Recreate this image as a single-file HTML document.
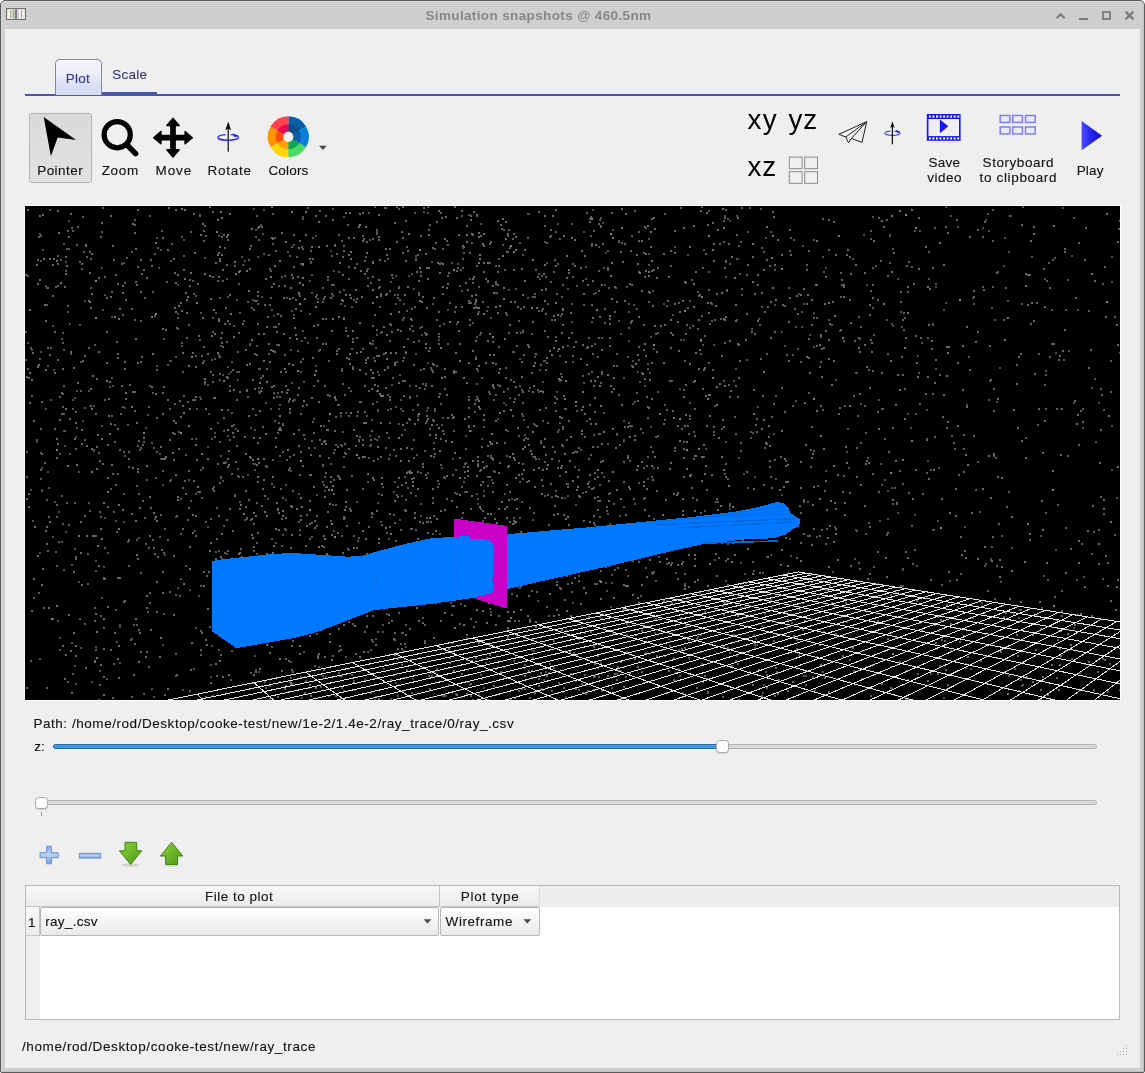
<!DOCTYPE html>
<html><head><meta charset="utf-8"><title>Simulation snapshots</title><style>
html,body{margin:0;padding:0;background:#fff}
body{width:1145px;height:1073px;position:relative;overflow:hidden;font-family:"Liberation Sans",sans-serif}
.a{position:absolute}
.t{position:absolute;white-space:nowrap;line-height:1}
#txt{position:absolute;left:0;top:0;width:1145px;height:1073px;will-change:transform}
#win{position:absolute;left:0;top:0;width:1143px;height:1071px;border:1px solid #5a5a5a;border-radius:5px 5px 2px 2px;background:#cfcfcf;box-shadow:inset 0 1px 0 #dcdcdc,inset 1px 0 0 #d8d8d8,inset -1px 0 0 #c2c2c2,inset 0 -1px 0 #c2c2c2}
#content{position:absolute;left:5px;top:29px;width:1135px;height:1039px;background:#efefef}
svg{position:absolute;overflow:visible}
</style></head><body>
<div id="win"></div><div id="content"></div>
<div class="a" style="left:25px;top:94px;width:1095px;height:2px;background:#4a58a8"></div><div class="a" style="left:102px;top:92px;width:55px;height:3px;background:#4a58a8"></div><div class="a" style="left:55px;top:59px;width:45px;height:35px;border:1px solid #8486a8;border-bottom:none;border-radius:5px 5px 0 0;background:linear-gradient(#f4f4ff 0%,#f0f0fc 38%,#dfe3f6 60%,#d3daf1 100%)"></div><div class="a" style="left:29px;top:113px;width:61px;height:68px;border:1px solid #b4b4b4;border-radius:3px;background:linear-gradient(#dadada,#e2e2e2)"></div><div class="a" style="left:53px;top:744px;width:1042px;height:3px;border:1px solid #b2b2b2;border-radius:3px;background:#d9d9d9"></div><div class="a" style="left:53px;top:744px;width:668px;height:3px;border:1px solid #2a6aa6;border-radius:3px;background:#3d9be2"></div><div class="a" style="left:716px;top:740px;width:11px;height:11px;border:1px solid #a9a9a9;border-radius:3.5px;background:#fcfcfc;box-shadow:0 1px 1px rgba(0,0,0,0.12)"></div><div class="a" style="left:41px;top:800px;width:1054px;height:3px;border:1px solid #b2b2b2;border-radius:3px;background:#d9d9d9"></div><div class="a" style="left:35px;top:797px;width:11px;height:10px;border:1px solid #a9a9a9;border-radius:3.5px;background:#fcfcfc;box-shadow:0 1px 1px rgba(0,0,0,0.12)"></div><div class="a" style="left:41px;top:812px;width:1px;height:4px;background:#9a9a9a"></div><div class="a" style="left:25px;top:885px;width:1093px;height:133px;border:1px solid #b9b9b9;background:#fff"></div><div class="a" style="left:26px;top:886px;width:1093px;height:21px;background:#ededed"></div><div class="a" style="left:26px;top:886px;width:413px;height:20px;border-bottom:1px solid #c4c4c4;border-right:1px solid #c4c4c4;background:linear-gradient(#f8f8f8,#ebebeb)"></div><div class="a" style="left:440px;top:886px;width:99px;height:20px;border-bottom:1px solid #c4c4c4;border-right:1px solid #dcdcdc;background:linear-gradient(#f8f8f8,#ebebeb)"></div><div class="a" style="left:26px;top:907px;width:14px;height:112px;background:#efefef"></div><div class="a" style="left:26px;top:907px;width:13px;height:28px;border-bottom:1px solid #c4c4c4;border-right:1px solid #c4c4c4;background:linear-gradient(#f8f8f8,#ebebeb)"></div><div class="a" style="left:40px;top:907px;width:397px;height:27px;border:1px solid #b6b6b6;border-radius:2px;background:linear-gradient(#ffffff,#f4f4f4 50%,#e9e9e9)"></div><div class="a" style="left:440px;top:907px;width:98px;height:27px;border:1px solid #b6b6b6;border-radius:2px;background:linear-gradient(#ffffff,#f4f4f4 50%,#e9e9e9)"></div>
<div style="position:absolute;left:24px;top:205px;width:1095px;height:494px;border:1px solid #fff;background:#000;overflow:hidden"><svg width="1095" height="494" viewBox="0 0 1095 494" style="position:absolute;left:0;top:0;display:block"><g stroke-width="2" fill="none" transform="translate(0,1)" shape-rendering="crispEdges"><path d="M0 68h2M4 103h2M4 196h2M12 77h2M12 160h2M12 349h2M14 9h2M14 73h2M16 247h2M23 401h2M24 52h2M32 4h2M36 186h2M39 472h2M41 59h2M45 145h2M46 21h2M48 161h2M48 365h2M50 216h2M50 439h2M55 346h2M56 237h2M63 94h2M66 87h2M66 242h2M67 169h2M71 451h2M76 232h2M78 371h2M81 125h2M93 112h2M94 102h2M97 86h2M97 303h2M114 426h2M121 259h2M121 389h2M126 180h2M128 306h2M132 350h2M142 43h2M144 233h2M147 226h2M148 52h2M148 214h2M149 101h2M150 105h2M150 268h2M159 72h2M163 159h2M167 308h2M169 46h2M170 238h2M170 309h2M175 28h2M176 426h2M177 156h2M183 365h2M187 282h2M192 48h2M193 309h2M194 150h2M196 48h2M196 136h2M196 203h2M201 170h2M202 223h2M203 468h2M204 302h2M209 55h2M212 224h2M214 64h2M215 298h2M217 117h2M224 138h2M224 157h2M227 331h2M235 171h2M238 154h2M238 273h2M241 309h2M244 446h2M246 0h2M249 145h2M253 323h2M256 185h2M260 452h2M263 263h2M263 485h2M264 192h2M264 202h2M265 81h2M267 71h2M268 396h2M270 128h2M279 486h2M283 374h2M284 268h2M286 40h2M289 321h2M290 481h2M292 118h2M294 249h2M295 219h2M299 290h2M300 237h2M301 223h2M302 70h2M303 379h2M305 270h2M306 124h2M307 279h2M314 272h2M315 206h2M319 303h2M327 135h2M329 61h2M331 146h2M333 20h2M333 234h2M334 7h2M337 238h2M341 46h2M346 306h2M346 433h2M348 273h2M349 478h2M352 240h2M353 149h2M358 147h2M360 321h2M368 468h2M369 156h2M369 433h2M370 146h2M373 81h2M373 105h2M377 0h2M377 218h2M379 88h2M383 27h2M384 190h2M389 311h2M391 401h2M392 332h2M397 362h2M400 268h2M401 315h2M405 249h2M406 179h2M408 214h2M408 242h2M410 324h2M413 221h2M414 57h2M414 66h2M414 187h2M416 171h2M416 382h2M417 224h2M419 32h2M419 170h2M419 406h2M421 269h2M423 442h2M423 461h2M429 0h2M429 246h2M430 100h2M433 124h2M435 331h2M437 39h2M439 399h2M441 35h2M441 453h2M441 487h2M445 13h2M445 489h2M446 289h2M447 72h2M450 95h2M453 26h2M457 275h2M457 404h2M458 107h2M462 307h2M462 493h2M466 227h2M466 251h2M468 86h2M468 148h2M470 344h2M471 316h2M474 179h2M476 356h2M479 132h2M479 302h2M479 336h2M481 45h2M482 405h2M483 293h2M484 118h2M489 491h2M490 271h2M498 338h2M503 389h2M506 247h2M507 185h2M507 225h2M509 330h2M510 147h2M511 101h2M513 261h2M516 273h2M517 483h2M526 148h2M526 252h2M527 366h2M528 141h2M531 378h2M532 108h2M535 261h2M535 382h2M536 126h2M538 481h2M539 247h2M540 174h2M540 312h2M541 49h2M541 277h2M547 274h2M548 323h2M550 135h2M550 358h2M553 289h2M553 432h2M561 141h2M566 139h2M566 282h2M567 74h2M567 111h2M572 170h2M574 374h2M577 254h2M584 109h2M586 92h2M588 470h2M596 2h2M600 308h2M602 379h2M603 280h2M610 157h2M611 48h2M612 460h2M613 34h2M620 47h2M620 64h2M621 370h2M624 173h2M624 353h2M626 12h2M639 449h2M648 211h2M648 473h2M649 474h2M656 357h2M657 308h2M658 21h2M658 190h2M659 219h2M659 441h2M664 157h2M669 304h2M674 386h2M679 267h2M679 469h2M681 6h2M681 472h2M683 188h2M684 188h2M691 180h2M694 177h2M695 299h2M697 399h2M698 263h2M698 440h2M704 134h2M706 355h2M709 71h2M710 307h2M715 377h2M716 304h2M720 133h2M720 376h2M721 265h2M726 125h2M727 367h2M738 213h2M742 325h2M742 350h2M749 489h2M762 359h2M765 48h2M777 396h2M781 150h2M786 93h2M787 298h2M798 141h2M798 425h2M802 383h2M803 96h2M808 259h2M822 43h2M833 131h2M839 138h2M840 257h2M846 136h2M848 34h2M852 345h2M862 432h2M866 65h2M867 293h2M870 198h2M875 387h2M880 345h2M887 292h2M903 118h2M915 413h2M917 210h2M929 412h2M936 348h2M938 429h2M939 344h2M940 248h2M940 461h2M941 200h2M948 84h2M950 135h2M963 249h2M965 173h2M966 354h2M972 270h2M974 353h2M984 9h2M984 392h2M992 221h2M993 484h2M995 395h2M999 355h2M1000 79h2M1006 96h2M1008 27h2M1017 470h2M1021 356h2M1028 19h2M1028 137h2M1031 413h2M1034 149h2M1034 442h2M1037 144h2M1040 444h2M1052 208h2M1055 407h2M1072 465h2M1078 302h2M1085 315h2M1092 260h2M1094 14h2" stroke="#5a726f"/><path d="M0 125h2M0 153h2M1 170h2M1 245h2M1 292h2M1 481h2M2 3h2M3 287h2M3 300h2M4 166h2M6 404h2M7 146h2M8 214h2M8 372h2M11 58h2M12 53h2M18 401h2M20 114h2M20 324h2M21 320h2M22 81h2M25 141h2M27 58h2M27 89h2M28 52h2M31 232h2M32 57h2M34 213h2M37 439h2M38 179h2M39 80h2M39 224h2M40 448h2M42 24h2M43 30h2M45 7h2M45 444h2M49 232h2M52 176h2M54 55h2M55 315h2M56 57h2M56 223h2M56 378h2M59 149h2M59 309h2M61 239h2M61 329h2M63 141h2M64 45h2M64 66h2M65 101h2M65 199h2M66 47h2M68 243h2M69 414h2M69 454h2M70 207h2M70 407h2M70 443h2M71 172h2M71 240h2M71 262h2M72 228h2M73 71h2M73 359h2M73 493h2M74 254h2M74 478h2M77 257h2M78 372h2M78 412h2M78 442h2M78 470h2M79 372h2M81 91h2M82 271h2M82 300h2M82 400h2M83 192h2M83 209h2M84 227h2M85 9h2M85 90h2M85 443h2M86 258h2M87 39h2M87 267h2M87 491h2M88 457h2M89 426h2M90 68h2M92 147h2M92 151h2M92 222h2M92 371h2M93 439h2M93 471h2M94 243h2M95 207h2M96 57h2M97 79h2M98 395h2M99 155h2M99 162h2M100 93h2M103 252h2M103 333h2M104 178h2M106 307h2M107 185h2M109 26h2M109 185h2M109 204h2M110 42h2M110 75h2M110 412h2M111 78h2M111 216h2M112 262h2M113 423h2M115 53h2M115 85h2M115 155h2M115 241h2M118 231h2M120 450h2M121 71h2M121 401h2M124 290h2M124 386h2M125 53h2M125 301h2M125 423h2M128 341h2M129 109h2M131 245h2M132 41h2M134 450h2M135 240h2M135 308h2M137 31h2M137 122h2M137 186h2M137 207h2M137 252h2M139 488h2M142 193h2M142 333h2M142 482h2M143 1h2M144 385h2M148 408h2M150 76h2M150 216h2M150 447h2M151 121h2M151 309h2M151 468h2M152 68h2M152 290h2M152 293h2M153 242h2M155 96h2M156 104h2M157 146h2M157 199h2M157 322h2M158 189h2M160 86h2M161 93h2M163 301h2M164 79h2M164 202h2M164 340h2M165 463h2M167 326h2M168 7h2M169 193h2M170 160h2M170 190h2M170 329h2M171 253h2M173 129h2M174 8h2M175 443h2M176 149h2M177 111h2M177 261h2M178 24h2M178 365h2M178 379h2M179 19h2M179 175h2M180 202h2M180 433h2M182 402h2M184 0h2M185 165h2M185 222h2M185 336h2M185 476h2M187 70h2M189 127h2M190 56h2M190 352h2M191 332h2M191 372h2M193 46h2M193 70h2M194 40h2M194 276h2M194 454h2M195 131h2M195 350h2M195 448h2M196 30h2M196 327h2M197 63h2M197 358h2M197 470h2M198 211h2M199 117h2M199 256h2M200 101h2M200 360h2M201 30h2M201 313h2M202 114h2M202 171h2M202 252h2M202 397h2M203 258h2M204 7h2M204 88h2M204 233h2M204 366h2M204 421h2M205 362h2M206 267h2M207 163h2M207 226h2M208 230h2M209 289h2M209 386h2M209 421h2M210 255h2M211 193h2M212 145h2M213 126h2M214 185h2M214 302h2M217 364h2M218 361h2M220 247h2M221 311h2M223 209h2M223 293h2M224 42h2M224 388h2M225 39h2M226 101h2M226 312h2M226 328h2M226 394h2M227 404h2M227 476h2M228 103h2M228 231h2M228 257h2M228 306h2M228 317h2M228 361h2M229 147h2M229 182h2M229 422h2M230 309h2M230 425h2M230 465h2M231 258h2M231 384h2M232 85h2M232 89h2M232 117h2M232 275h2M233 33h2M233 127h2M233 162h2M233 256h2M234 231h2M234 462h2M236 20h2M237 169h2M239 98h2M241 120h2M241 260h2M242 395h2M243 137h2M246 80h2M246 180h2M247 32h2M248 179h2M248 339h2M250 120h2M250 240h2M251 125h2M252 303h2M252 490h2M253 138h2M253 306h2M254 475h2M255 109h2M255 165h2M255 223h2M256 464h2M257 218h2M257 291h2M258 91h2M258 127h2M259 79h2M259 162h2M260 179h2M260 311h2M263 157h2M263 454h2M265 299h2M266 328h2M266 439h2M266 463h2M267 194h2M267 384h2M267 465h2M268 227h2M269 414h2M270 102h2M271 385h2M271 415h2M272 70h2M273 41h2M273 181h2M274 268h2M274 398h2M274 447h2M275 155h2M275 245h2M275 309h2M275 353h2M275 399h2M277 199h2M277 259h2M278 194h2M278 228h2M281 198h2M281 319h2M281 390h2M283 241h2M283 481h2M284 429h2M285 55h2M285 248h2M285 268h2M287 151h2M288 226h2M288 280h2M289 314h2M290 9h2M290 164h2M292 400h2M293 15h2M293 195h2M293 381h2M293 447h2M294 143h2M294 233h2M296 339h2M297 137h2M297 469h2M298 329h2M299 90h2M299 450h2M300 9h2M300 137h2M300 393h2M301 39h2M301 280h2M301 320h2M302 188h2M302 223h2M302 305h2M305 275h2M306 78h2M306 328h2M307 449h2M308 246h2M308 406h2M309 38h2M309 190h2M309 224h2M310 193h2M310 489h2M311 144h2M312 240h2M312 269h2M313 142h2M313 270h2M313 422h2M314 56h2M314 469h2M315 443h2M316 239h2M317 50h2M317 68h2M317 346h2M317 369h2M317 376h2M318 39h2M318 44h2M318 418h2M318 484h2M319 237h2M320 6h2M320 88h2M320 124h2M320 247h2M320 295h2M321 283h2M321 384h2M322 129h2M322 342h2M322 389h2M323 152h2M323 242h2M324 6h2M324 147h2M324 302h2M325 91h2M325 206h2M325 304h2M325 367h2M326 269h2M327 162h2M328 341h2M330 83h2M330 95h2M330 382h2M330 447h2M331 92h2M331 131h2M331 229h2M332 205h2M333 251h2M334 230h2M335 64h2M335 145h2M336 90h2M337 34h2M337 233h2M338 32h2M339 179h2M339 425h2M340 156h2M340 167h2M340 332h2M340 354h2M340 405h2M341 64h2M341 347h2M341 348h2M341 420h2M345 163h2M345 233h2M345 486h2M346 171h2M346 182h2M347 55h2M347 70h2M347 166h2M347 271h2M348 254h2M348 372h2M349 108h2M349 154h2M349 178h2M350 378h2M350 438h2M351 304h2M353 8h2M353 30h2M353 33h2M353 81h2M354 53h2M355 89h2M355 216h2M355 365h2M356 125h2M356 288h2M357 375h2M358 120h2M360 1h2M360 88h2M360 181h2M360 241h2M360 358h2M360 392h2M361 87h2M361 226h2M361 380h2M362 160h2M363 408h2M363 416h2M364 190h2M365 118h2M365 364h2M365 473h2M366 125h2M366 414h2M368 308h2M368 432h2M369 16h2M369 158h2M369 316h2M369 426h2M371 35h2M372 91h2M372 290h2M372 392h2M373 271h2M374 93h2M374 366h2M375 124h2M375 242h2M375 391h2M376 25h2M376 371h2M376 442h2M376 458h2M377 31h2M377 46h2M378 140h2M378 189h2M379 174h2M380 54h2M380 428h2M381 382h2M382 80h2M384 122h2M384 213h2M384 384h2M385 322h2M386 266h2M386 374h2M387 275h2M387 351h2M388 233h2M388 394h2M389 100h2M389 217h2M391 65h2M391 367h2M391 493h2M392 213h2M392 265h2M392 282h2M393 74h2M394 181h2M394 315h2M395 65h2M397 90h2M397 257h2M397 260h2M397 416h2M398 1h2M398 380h2M399 362h2M399 436h2M400 47h2M400 342h2M401 61h2M401 311h2M402 72h2M402 212h2M402 326h2M403 61h2M403 469h2M404 228h2M404 482h2M406 218h2M406 336h2M407 157h2M407 165h2M407 213h2M407 282h2M407 296h2M407 369h2M408 91h2M408 158h2M409 247h2M410 396h2M411 15h2M412 280h2M413 105h2M413 190h2M414 244h2M415 6h2M415 304h2M415 414h2M416 11h2M416 488h2M417 80h2M417 87h2M417 489h2M419 271h2M419 303h2M419 489h2M421 81h2M421 188h2M421 339h2M423 66h2M423 378h2M424 456h2M426 208h2M426 294h2M428 164h2M428 166h2M429 347h2M430 146h2M430 380h2M431 64h2M431 300h2M432 61h2M432 115h2M432 366h2M432 439h2M433 28h2M434 137h2M434 251h2M435 370h2M435 385h2M435 391h2M436 4h2M436 100h2M437 306h2M439 257h2M440 76h2M441 19h2M441 176h2M442 83h2M442 269h2M442 377h2M443 96h2M443 156h2M443 210h2M443 219h2M443 326h2M444 46h2M444 118h2M445 302h2M447 144h2M447 493h2M448 5h2M448 219h2M449 197h2M450 88h2M450 152h2M451 101h2M451 162h2M452 107h2M452 250h2M452 254h2M453 30h2M454 202h2M455 29h2M455 263h2M456 452h2M457 304h2M458 56h2M458 65h2M458 208h2M458 213h2M459 311h2M459 377h2M460 72h2M462 74h2M462 134h2M462 239h2M463 395h2M464 127h2M464 148h2M464 187h2M464 439h2M465 408h2M467 79h2M467 135h2M467 178h2M467 276h2M468 181h2M469 312h2M469 330h2M470 77h2M470 157h2M470 418h2M470 462h2M472 65h2M472 106h2M473 166h2M473 302h2M473 409h2M473 430h2M474 162h2M474 328h2M474 371h2M475 18h2M475 465h2M476 295h2M478 185h2M480 15h2M480 32h2M480 106h2M480 161h2M481 278h2M481 300h2M481 311h2M481 333h2M482 260h2M482 421h2M482 430h2M483 340h2M483 341h2M484 41h2M484 315h2M484 414h2M485 95h2M486 351h2M486 387h2M487 360h2M489 95h2M489 414h2M490 180h2M490 336h2M490 378h2M491 126h2M491 292h2M491 302h2M491 389h2M493 256h2M493 484h2M494 179h2M495 325h2M495 379h2M495 403h2M496 62h2M496 170h2M497 88h2M497 124h2M497 257h2M498 100h2M498 263h2M499 43h2M499 240h2M499 458h2M501 338h2M502 31h2M502 138h2M502 409h2M503 140h2M503 238h2M503 274h2M504 301h2M504 413h2M504 415h2M504 491h2M505 244h2M506 166h2M506 368h2M507 115h2M507 451h2M508 179h2M508 263h2M509 250h2M509 486h2M510 63h2M510 252h2M510 369h2M511 219h2M512 70h2M513 104h2M513 351h2M513 472h2M514 203h2M515 158h2M515 184h2M515 236h2M516 287h2M517 263h2M518 67h2M519 9h2M519 124h2M519 154h2M519 232h2M520 70h2M520 82h2M520 107h2M520 248h2M521 156h2M521 469h2M522 480h2M524 387h2M525 29h2M525 277h2M528 109h2M528 308h2M528 343h2M528 409h2M529 113h2M529 245h2M529 299h2M530 3h2M530 59h2M530 204h2M531 192h2M531 340h2M531 403h2M532 307h2M532 486h2M533 408h2M535 173h2M536 259h2M536 291h2M537 103h2M537 118h2M537 485h2M538 29h2M538 363h2M539 192h2M539 393h2M541 71h2M541 424h2M542 280h2M543 63h2M543 66h2M543 131h2M544 254h2M544 445h2M545 106h2M545 409h2M546 126h2M546 376h2M547 70h2M548 140h2M551 245h2M551 283h2M552 270h2M552 346h2M552 355h2M554 290h2M555 152h2M556 44h2M556 203h2M556 420h2M557 138h2M557 200h2M557 486h2M559 49h2M559 230h2M560 330h2M560 345h2M561 158h2M562 78h2M562 140h2M562 277h2M563 167h2M563 410h2M564 15h2M564 315h2M564 350h2M565 425h2M566 37h2M567 147h2M567 240h2M568 179h2M569 191h2M569 266h2M569 457h2M572 270h2M573 17h2M574 294h2M575 255h2M575 364h2M576 143h2M576 165h2M576 167h2M576 237h2M576 466h2M577 37h2M580 358h2M582 168h2M583 274h2M583 333h2M584 112h2M586 185h2M587 222h2M588 171h2M588 182h2M588 391h2M589 467h2M590 321h2M591 227h2M591 283h2M591 463h2M591 473h2M593 35h2M595 464h2M597 55h2M598 234h2M598 255h2M598 275h2M598 378h2M598 480h2M599 37h2M599 220h2M599 351h2M600 7h2M600 403h2M601 417h2M601 428h2M602 220h2M602 251h2M604 77h2M604 230h2M604 282h2M604 466h2M605 44h2M606 78h2M606 114h2M607 160h2M607 388h2M608 318h2M609 229h2M609 404h2M612 148h2M613 65h2M616 34h2M616 84h2M616 255h2M616 424h2M618 118h2M618 476h2M619 20h2M619 70h2M619 172h2M619 303h2M619 323h2M621 259h2M621 282h2M621 431h2M622 200h2M622 211h2M622 331h2M623 65h2M623 201h2M623 309h2M625 40h2M626 64h2M626 156h2M626 366h2M627 99h2M628 11h2M628 63h2M629 22h2M630 127h2M630 412h2M631 71h2M631 145h2M631 284h2M631 449h2M632 61h2M632 261h2M633 423h2M634 355h2M636 443h2M638 156h2M638 217h2M638 394h2M640 293h2M641 332h2M641 486h2M642 94h2M643 70h2M644 262h2M645 44h2M645 126h2M645 141h2M645 256h2M645 343h2M646 356h2M647 128h2M647 204h2M648 287h2M649 24h2M649 46h2M649 97h2M649 241h2M649 334h2M652 286h2M652 358h2M653 144h2M654 105h2M655 411h2M656 222h2M656 442h2M657 94h2M657 292h2M657 304h2M658 251h2M658 270h2M659 379h2M660 76h2M660 178h2M660 208h2M663 348h2M663 380h2M663 433h2M664 40h2M664 209h2M668 19h2M668 252h2M668 337h2M669 229h2M669 249h2M669 375h2M670 65h2M670 146h2M671 293h2M671 432h2M671 481h2M672 321h2M672 430h2M673 89h2M673 162h2M674 88h2M674 143h2M674 325h2M675 4h2M676 109h2M677 182h2M678 238h2M679 161h2M679 405h2M680 47h2M680 259h2M681 219h2M683 106h2M685 96h2M686 268h2M687 16h2M688 37h2M688 54h2M688 220h2M689 113h2M690 99h2M690 335h2M690 347h2M691 87h2M691 369h2M692 303h2M694 37h2M696 328h2M696 336h2M697 422h2M697 490h2M698 14h2M698 395h2M699 11h2M699 179h2M699 396h2M700 3h2M700 54h2M700 55h2M700 110h2M700 257h2M702 378h2M702 441h2M705 184h2M706 404h2M706 465h2M707 336h2M709 348h2M710 98h2M710 179h2M710 227h2M710 454h2M711 28h2M712 11h2M712 457h2M714 154h2M716 1h2M716 401h2M721 107h2M722 58h2M723 445h2M727 50h2M728 282h2M729 87h2M729 127h2M729 436h2M729 438h2M730 218h2M730 309h2M731 225h2M732 114h2M733 463h2M736 41h2M736 222h2M738 278h2M739 105h2M741 53h2M741 147h2M741 237h2M743 219h2M743 230h2M744 239h2M744 254h2M745 95h2M745 131h2M746 281h2M747 5h2M748 197h2M749 58h2M749 311h2M750 329h2M751 427h2M751 465h2M753 302h2M754 283h2M754 298h2M755 358h2M756 48h2M756 181h2M756 343h2M757 98h2M758 280h2M759 205h2M759 372h2M760 331h2M762 258h2M762 413h2M762 484h2M766 416h2M767 475h2M768 429h2M774 400h2M775 88h2M775 255h2M775 281h2M775 336h2M777 423h2M778 82h2M778 295h2M778 327h2M779 196h2M780 238h2M780 478h2M781 63h2M781 97h2M783 44h2M783 132h2M783 151h2M784 166h2M786 118h2M786 251h2M787 247h2M788 280h2M790 78h2M791 450h2M794 138h2M794 329h2M794 438h2M795 128h2M796 142h2M796 170h2M800 70h2M800 274h2M800 337h2M800 488h2M801 303h2M803 133h2M803 360h2M803 485h2M804 319h2M806 396h2M807 95h2M808 154h2M808 335h2M809 296h2M809 389h2M810 48h2M810 322h2M813 207h2M814 201h2M815 123h2M816 73h2M817 449h2M818 78h2M818 90h2M818 134h2M819 296h2M819 308h2M820 396h2M821 48h2M825 116h2M825 359h2M827 441h2M828 189h2M830 58h2M831 270h2M832 209h2M833 141h2M834 145h2M834 187h2M836 472h2M839 66h2M839 299h2M841 160h2M841 254h2M841 460h2M843 256h2M844 98h2M845 133h2M846 145h2M847 78h2M847 91h2M847 164h2M847 267h2M853 11h2M855 54h2M860 351h2M861 13h2M861 370h2M862 69h2M862 147h2M863 245h2M865 460h2M869 384h2M870 254h2M870 430h2M872 168h2M874 455h2M877 113h2M877 168h2M878 123h2M881 464h2M882 351h2M882 473h2M886 319h2M890 129h2M890 263h2M891 394h2M892 467h2M893 11h2M893 62h2M894 197h2M895 131h2M901 233h2M902 170h2M904 82h2M906 142h2M908 263h2M909 176h2M910 153h2M910 442h2M918 58h2M918 188h2M919 434h2M921 140h2M921 398h2M922 26h2M923 365h2M925 444h2M930 309h2M932 156h2M935 330h2M937 183h2M938 265h2M941 120h2M944 30h2M947 411h2M948 90h2M952 23h2M952 125h2M955 454h2M959 15h2M959 427h2M971 66h2M971 359h2M973 317h2M975 445h2M976 271h2M980 81h2M987 448h2M991 177h2M991 428h2M992 449h2M993 150h2M994 403h2M995 414h2M996 234h2M1000 67h2M1000 251h2M1002 68h2M1002 98h2M1004 68h2M1004 327h2M1005 117h2M1008 114h2M1009 167h2M1011 96h2M1014 395h2M1015 422h2M1017 246h2M1018 62h2M1019 100h2M1022 488h2M1026 458h2M1033 153h2M1035 248h2M1036 202h2M1036 404h2M1039 45h2M1039 123h2M1040 321h2M1040 366h2M1045 342h2M1046 452h2M1049 194h2M1050 91h2M1052 408h2M1053 36h2M1055 204h2M1056 337h2M1057 215h2M1059 53h2M1059 380h2M1060 21h2M1062 324h2M1063 161h2M1065 143h2M1066 409h2M1067 299h2M1069 74h2M1074 256h2M1078 307h2M1079 60h2M1080 110h2M1082 356h2M1082 379h2M1085 394h2M1090 403h2M1091 380h2M1092 35h2M1092 138h2M1093 22h2" stroke="#646462"/><path d="M1 270h2M2 69h2M2 162h2M5 141h2M5 454h2M6 143h2M6 189h2M8 391h2M13 30h2M13 386h2M14 27h2M14 152h2M14 452h2M15 29h2M15 222h2M15 263h2M16 195h2M19 256h2M21 81h2M21 98h2M21 293h2M21 481h2M22 141h2M22 344h2M23 310h2M24 148h2M27 412h2M29 222h2M30 80h2M30 345h2M31 298h2M31 310h2M31 359h2M32 49h2M32 79h2M32 237h2M33 335h2M34 190h2M34 247h2M34 443h2M35 53h2M37 136h2M37 187h2M37 200h2M37 317h2M38 143h2M38 363h2M40 64h2M41 42h2M41 296h2M42 99h2M42 475h2M43 318h2M44 212h2M46 358h2M46 436h2M47 24h2M47 467h2M49 296h2M50 205h2M50 242h2M50 350h2M50 352h2M51 38h2M52 20h2M54 118h2M54 412h2M55 155h2M55 184h2M56 62h2M57 10h2M58 45h2M59 233h2M59 417h2M60 38h2M60 461h2M61 50h2M62 347h2M62 377h2M64 304h2M65 52h2M65 81h2M68 329h2M69 138h2M69 401h2M70 329h2M70 364h2M73 246h2M74 305h2M75 30h2M75 310h2M75 409h2M75 458h2M76 25h2M77 1h2M78 421h2M79 70h2M79 193h2M79 341h2M82 238h2M86 85h2M86 209h2M88 305h2M89 218h2M89 235h2M90 278h2M90 403h2M91 135h2M91 325h2M92 77h2M92 267h2M96 179h2M97 108h2M97 200h2M98 245h2M98 287h2M99 76h2M100 192h2M101 51h2M102 218h2M102 335h2M103 359h2M105 433h2M106 45h2M106 102h2M106 490h2M108 418h2M109 13h2M109 18h2M109 113h2M109 437h2M111 279h2M111 333h2M111 418h2M112 3h2M112 60h2M112 239h2M113 234h2M113 287h2M115 114h2M115 366h2M115 445h2M116 67h2M116 150h2M117 238h2M118 63h2M118 235h2M118 487h2M119 91h2M119 311h2M120 337h2M121 273h2M121 445h2M122 405h2M123 200h2M123 341h2M123 460h2M124 9h2M124 396h2M126 236h2M127 85h2M127 186h2M127 333h2M128 241h2M129 47h2M130 271h2M131 163h2M131 211h2M131 405h2M136 24h2M136 343h2M137 264h2M138 180h2M138 346h2M138 407h2M139 322h2M141 75h2M142 158h2M144 202h2M144 274h2M146 37h2M148 253h2M148 349h2M149 197h2M149 227h2M150 150h2M150 388h2M150 469h2M152 111h2M152 122h2M153 225h2M154 389h2M155 327h2M155 372h2M156 30h2M156 136h2M157 165h2M157 281h2M158 49h2M159 274h2M160 248h2M160 287h2M161 131h2M162 195h2M162 313h2M163 118h2M163 264h2M164 73h2M164 484h2M165 25h2M166 232h2M167 74h2M167 193h2M168 87h2M168 274h2M170 149h2M174 9h2M175 263h2M175 379h2M175 424h2M175 448h2M178 34h2M178 140h2M179 177h2M180 29h2M180 315h2M181 369h2M184 420h2M185 312h2M187 5h2M187 125h2M187 168h2M187 175h2M187 357h2M187 489h2M188 191h2M188 280h2M188 284h2M189 230h2M191 301h2M191 359h2M191 469h2M192 74h2M193 149h2M193 413h2M193 443h2M194 52h2M194 91h2M194 167h2M194 235h2M195 270h2M195 271h2M196 126h2M196 352h2M197 74h2M197 140h2M198 319h2M199 41h2M199 346h2M201 58h2M201 135h2M202 33h2M202 203h2M202 344h2M202 371h2M204 117h2M206 155h2M206 206h2M206 444h2M208 361h2M209 59h2M209 288h2M209 355h2M211 239h2M212 269h2M212 413h2M213 77h2M213 270h2M214 106h2M215 342h2M216 350h2M216 421h2M217 58h2M217 270h2M218 374h2M218 397h2M218 402h2M219 313h2M220 143h2M221 184h2M222 95h2M222 190h2M223 53h2M224 62h2M225 251h2M225 313h2M225 466h2M226 370h2M227 173h2M227 202h2M228 340h2M228 344h2M229 94h2M230 23h2M230 30h2M230 208h2M231 9h2M231 94h2M231 296h2M231 336h2M231 347h2M231 426h2M232 21h2M232 97h2M232 236h2M232 326h2M232 381h2M234 186h2M235 18h2M235 359h2M236 181h2M236 299h2M237 220h2M237 282h2M238 354h2M238 420h2M239 475h2M240 259h2M240 481h2M241 162h2M242 110h2M243 48h2M243 147h2M243 367h2M244 62h2M244 98h2M244 155h2M245 64h2M245 91h2M245 143h2M245 472h2M246 277h2M246 332h2M246 364h2M247 7h2M247 37h2M247 253h2M247 380h2M248 186h2M248 191h2M248 280h2M248 377h2M248 391h2M249 31h2M249 214h2M250 44h2M250 231h2M252 226h2M253 79h2M253 216h2M253 348h2M254 190h2M254 198h2M254 249h2M255 282h2M255 431h2M256 70h2M256 312h2M256 428h2M257 217h2M257 245h2M257 354h2M257 383h2M259 69h2M259 148h2M259 322h2M259 482h2M260 165h2M260 323h2M260 479h2M261 253h2M261 431h2M263 416h2M264 49h2M264 131h2M264 206h2M264 250h2M264 261h2M264 475h2M265 341h2M265 471h2M266 40h2M267 284h2M267 434h2M268 28h2M268 60h2M268 111h2M268 248h2M270 93h2M271 50h2M272 144h2M272 188h2M273 87h2M273 223h2M273 358h2M274 34h2M274 89h2M274 323h2M274 328h2M275 57h2M275 104h2M275 207h2M276 393h2M277 42h2M277 58h2M277 152h2M278 175h2M278 374h2M279 131h2M279 409h2M280 339h2M281 308h2M282 1h2M282 408h2M284 294h2M284 332h2M285 44h2M286 68h2M286 86h2M286 234h2M286 316h2M286 330h2M287 31h2M287 215h2M288 119h2M288 378h2M289 459h2M290 372h2M290 385h2M291 88h2M291 131h2M291 309h2M291 319h2M292 95h2M292 375h2M292 449h2M293 364h2M293 460h2M294 4h2M295 364h2M295 480h2M296 237h2M297 81h2M297 95h2M297 258h2M297 259h2M297 275h2M298 92h2M298 235h2M298 278h2M298 340h2M298 463h2M299 270h2M300 112h2M300 266h2M300 280h2M300 384h2M302 73h2M303 154h2M303 214h2M303 251h2M303 374h2M304 189h2M304 427h2M305 314h2M306 49h2M306 87h2M307 13h2M307 89h2M308 78h2M308 273h2M308 287h2M309 39h2M309 243h2M310 210h2M310 238h2M310 298h2M311 47h2M311 378h2M312 198h2M312 373h2M313 28h2M313 65h2M313 198h2M313 466h2M315 209h2M315 238h2M316 34h2M316 164h2M316 329h2M316 469h2M317 177h2M317 375h2M318 83h2M318 111h2M318 250h2M318 260h2M318 312h2M318 389h2M319 188h2M319 246h2M319 311h2M320 121h2M320 300h2M321 151h2M321 319h2M321 356h2M322 18h2M322 408h2M323 60h2M323 72h2M323 181h2M323 209h2M323 415h2M324 157h2M325 184h2M326 100h2M326 142h2M326 468h2M327 132h2M327 160h2M327 365h2M327 417h2M328 31h2M328 93h2M328 223h2M328 329h2M328 474h2M330 239h2M331 57h2M331 209h2M332 334h2M332 402h2M333 233h2M333 331h2M335 195h2M337 6h2M337 29h2M337 142h2M337 282h2M338 33h2M338 382h2M339 54h2M339 205h2M339 250h2M339 353h2M339 473h2M341 352h2M341 409h2M342 62h2M342 366h2M342 403h2M342 445h2M343 184h2M343 320h2M344 239h2M345 76h2M345 137h2M345 238h2M345 443h2M346 224h2M346 307h2M346 310h2M347 119h2M347 197h2M347 409h2M348 171h2M349 493h2M351 23h2M351 27h2M351 123h2M351 149h2M351 184h2M351 233h2M352 179h2M352 203h2M352 425h2M353 230h2M353 336h2M354 80h2M355 87h2M355 250h2M356 271h2M356 318h2M359 1h2M359 353h2M361 326h2M362 52h2M363 231h2M363 252h2M364 42h2M364 84h2M364 117h2M364 134h2M364 216h2M364 307h2M364 320h2M365 202h2M366 366h2M367 171h2M367 352h2M367 386h2M367 457h2M368 243h2M369 88h2M370 249h2M370 334h2M371 0h2M371 288h2M372 88h2M372 280h2M372 442h2M372 452h2M373 2h2M373 80h2M373 406h2M374 168h2M375 323h2M375 437h2M376 228h2M376 278h2M376 426h2M377 113h2M377 154h2M377 174h2M377 204h2M377 426h2M378 111h2M378 151h2M378 444h2M378 471h2M379 270h2M379 303h2M379 452h2M380 14h2M380 293h2M380 340h2M380 418h2M381 40h2M381 104h2M381 216h2M381 463h2M382 132h2M384 191h2M384 348h2M384 422h2M385 286h2M386 102h2M386 113h2M386 119h2M386 242h2M386 272h2M386 322h2M386 486h2M387 124h2M388 135h2M388 158h2M388 251h2M388 271h2M390 52h2M390 53h2M390 179h2M390 390h2M391 358h2M392 48h2M393 86h2M393 88h2M393 134h2M394 369h2M395 69h2M396 120h2M397 177h2M397 411h2M399 126h2M399 182h2M399 244h2M399 418h2M399 434h2M400 128h2M400 141h2M400 179h2M400 216h2M401 127h2M401 214h2M402 0h2M402 201h2M402 315h2M403 23h2M403 368h2M404 18h2M404 141h2M405 161h2M405 315h2M406 469h2M407 291h2M408 250h2M408 309h2M408 338h2M408 359h2M408 431h2M409 42h2M409 204h2M409 357h2M409 466h2M410 36h2M410 231h2M411 113h2M411 159h2M411 337h2M411 462h2M412 274h2M412 350h2M413 127h2M413 130h2M413 137h2M413 439h2M414 119h2M415 197h2M415 232h2M415 258h2M417 42h2M418 117h2M418 227h2M418 270h2M419 182h2M421 34h2M421 292h2M422 38h2M422 69h2M422 137h2M422 348h2M423 478h2M424 96h2M424 451h2M426 408h2M427 268h2M428 210h2M428 224h2M429 105h2M429 329h2M429 343h2M430 263h2M430 487h2M431 287h2M432 324h2M433 335h2M433 360h2M434 79h2M434 376h2M434 417h2M435 63h2M436 280h2M436 467h2M436 490h2M437 52h2M437 61h2M438 40h2M438 46h2M438 260h2M438 275h2M439 265h2M439 271h2M439 469h2M440 242h2M440 256h2M440 348h2M441 285h2M441 327h2M442 260h2M442 376h2M442 475h2M443 94h2M443 201h2M443 220h2M443 349h2M443 370h2M445 9h2M445 96h2M445 412h2M446 36h2M447 76h2M448 357h2M448 420h2M449 97h2M449 205h2M450 100h2M450 193h2M450 415h2M451 9h2M451 59h2M451 190h2M452 192h2M453 80h2M453 488h2M454 264h2M455 126h2M455 302h2M455 468h2M456 240h2M457 95h2M457 255h2M457 386h2M458 289h2M460 456h2M461 259h2M462 249h2M462 270h2M462 279h2M462 352h2M463 185h2M464 37h2M464 56h2M464 270h2M465 249h2M465 250h2M467 285h2M467 378h2M468 193h2M468 264h2M469 265h2M470 59h2M470 75h2M470 86h2M470 188h2M471 86h2M472 368h2M472 390h2M473 52h2M473 140h2M474 256h2M476 22h2M478 23h2M478 337h2M478 460h2M479 63h2M479 236h2M479 396h2M480 171h2M480 223h2M481 108h2M481 249h2M481 352h2M482 27h2M482 29h2M482 45h2M482 182h2M482 431h2M482 471h2M483 23h2M483 126h2M483 332h2M483 367h2M484 285h2M485 173h2M487 32h2M487 145h2M487 209h2M487 355h2M488 27h2M488 63h2M488 145h2M488 175h2M488 195h2M488 311h2M488 454h2M489 192h2M489 253h2M489 293h2M489 316h2M491 139h2M491 428h2M492 221h2M493 114h2M493 229h2M493 414h2M493 423h2M494 36h2M494 311h2M494 381h2M495 102h2M495 329h2M495 336h2M496 155h2M496 183h2M496 207h2M496 267h2M497 125h2M497 196h2M497 209h2M497 272h2M498 148h2M498 347h2M499 482h2M500 231h2M501 275h2M501 346h2M502 7h2M502 220h2M502 232h2M503 357h2M505 370h2M506 127h2M506 384h2M506 443h2M506 464h2M507 90h2M507 433h2M508 306h2M509 87h2M509 156h2M509 218h2M509 372h2M510 338h2M510 419h2M511 385h2M512 183h2M513 5h2M513 67h2M514 419h2M514 440h2M515 482h2M516 69h2M516 83h2M516 104h2M517 102h2M517 279h2M519 19h2M519 255h2M519 289h2M520 163h2M520 465h2M521 36h2M521 400h2M522 130h2M522 216h2M522 288h2M523 318h2M523 409h2M524 30h2M524 457h2M525 23h2M525 75h2M526 113h2M526 459h2M526 484h2M527 240h2M527 370h2M528 434h2M528 461h2M529 53h2M529 190h2M529 365h2M530 25h2M530 130h2M530 284h2M531 87h2M531 350h2M531 375h2M532 225h2M532 261h2M533 254h2M533 476h2M534 32h2M534 174h2M535 167h2M535 363h2M536 90h2M536 107h2M536 170h2M536 211h2M536 238h2M537 78h2M538 189h2M538 308h2M539 202h2M540 202h2M541 233h2M541 369h2M542 277h2M542 377h2M543 214h2M543 318h2M543 342h2M546 324h2M546 385h2M547 57h2M547 149h2M548 331h2M548 411h2M548 446h2M549 245h2M549 371h2M550 199h2M551 448h2M553 241h2M553 263h2M553 369h2M553 374h2M553 483h2M555 397h2M556 227h2M556 477h2M557 169h2M558 98h2M559 426h2M559 468h2M560 285h2M560 487h2M561 6h2M562 484h2M563 131h2M563 252h2M563 280h2M564 12h2M564 198h2M565 10h2M565 29h2M565 217h2M565 248h2M566 39h2M566 115h2M566 165h2M568 24h2M568 281h2M568 309h2M568 316h2M568 438h2M568 470h2M569 137h2M569 205h2M569 272h2M569 318h2M569 377h2M569 470h2M571 377h2M572 150h2M572 240h2M572 290h2M572 294h2M572 303h2M572 335h2M572 461h2M573 64h2M573 84h2M573 131h2M573 227h2M573 470h2M574 13h2M574 227h2M574 278h2M574 310h2M574 410h2M575 19h2M575 20h2M575 176h2M576 166h2M576 266h2M576 484h2M577 407h2M579 102h2M579 116h2M581 300h2M581 304h2M582 44h2M582 61h2M582 63h2M582 307h2M583 287h2M584 117h2M584 131h2M584 139h2M584 286h2M586 6h2M587 427h2M588 159h2M588 297h2M589 105h2M589 363h2M590 81h2M591 147h2M591 159h2M592 361h2M593 34h2M593 188h2M593 464h2M594 238h2M595 45h2M596 36h2M597 403h2M598 300h2M598 460h2M599 342h2M600 329h2M600 353h2M600 363h2M601 345h2M601 445h2M602 249h2M603 121h2M603 216h2M603 430h2M604 219h2M604 254h2M605 115h2M605 116h2M606 29h2M606 219h2M606 448h2M607 332h2M607 354h2M608 292h2M608 352h2M609 4h2M609 195h2M611 102h2M611 186h2M611 335h2M612 194h2M612 423h2M613 25h2M613 140h2M613 153h2M613 355h2M613 455h2M615 222h2M615 389h2M616 166h2M616 465h2M618 46h2M618 143h2M618 261h2M618 292h2M619 291h2M620 446h2M621 190h2M622 162h2M622 250h2M623 95h2M625 240h2M626 270h2M627 245h2M628 312h2M628 365h2M628 410h2M630 230h2M630 374h2M632 126h2M632 185h2M632 229h2M639 7h2M639 213h2M641 99h2M641 203h2M641 394h2M644 174h2M645 59h2M645 358h2M646 174h2M646 396h2M647 336h2M648 451h2M649 244h2M649 314h2M650 466h2M652 115h2M652 219h2M652 372h2M653 96h2M653 443h2M655 1h2M657 355h2M657 457h2M657 486h2M658 183h2M658 235h2M658 242h2M659 154h2M659 367h2M659 377h2M660 127h2M660 419h2M661 118h2M662 101h2M662 219h2M662 392h2M662 432h2M663 227h2M663 451h2M664 121h2M664 212h2M666 73h2M667 119h2M667 291h2M668 175h2M669 202h2M669 352h2M672 122h2M672 373h2M675 306h2M675 445h2M676 0h2M677 61h2M677 475h2M678 43h2M678 250h2M679 129h2M680 189h2M681 283h2M683 83h2M683 156h2M683 384h2M684 117h2M686 97h2M686 114h2M687 163h2M688 225h2M688 228h2M689 384h2M690 295h2M693 351h2M695 112h2M696 149h2M696 222h2M697 213h2M697 384h2M698 35h2M698 174h2M698 408h2M699 61h2M699 136h2M699 267h2M699 308h2M700 354h2M701 84h2M702 12h2M702 272h2M703 178h2M704 57h2M704 190h2M704 299h2M704 446h2M709 210h2M711 449h2M712 190h2M713 138h2M714 67h2M715 35h2M715 236h2M715 244h2M716 82h2M717 333h2M721 68h2M722 468h2M724 399h2M727 355h2M728 183h2M731 212h2M731 313h2M732 78h2M734 118h2M735 152h2M736 100h2M736 489h2M737 366h2M737 486h2M738 45h2M739 241h2M741 468h2M742 100h2M744 59h2M744 260h2M745 270h2M746 210h2M746 401h2M749 63h2M749 253h2M750 189h2M750 309h2M753 298h2M755 250h2M756 324h2M758 428h2M759 99h2M760 259h2M760 275h2M761 148h2M763 81h2M764 23h2M764 44h2M764 91h2M765 31h2M767 199h2M768 33h2M769 102h2M771 351h2M771 442h2M772 107h2M775 155h2M775 306h2M776 105h2M779 414h2M780 469h2M781 58h2M782 295h2M782 329h2M783 186h2M784 329h2M785 243h2M785 260h2M786 220h2M787 470h2M788 33h2M788 111h2M788 244h2M788 322h2M791 111h2M791 139h2M792 469h2M794 160h2M795 130h2M795 155h2M796 323h2M797 12h2M797 203h2M797 465h2M798 65h2M799 284h2M800 383h2M801 322h2M802 331h2M803 13h2M803 43h2M804 379h2M806 118h2M808 15h2M808 401h2M810 302h2M815 66h2M815 90h2M815 373h2M817 285h2M818 80h2M818 269h2M819 199h2M822 222h2M824 50h2M824 93h2M824 286h2M824 453h2M825 440h2M829 134h2M830 166h2M831 241h2M833 110h2M833 356h2M834 362h2M835 120h2M835 236h2M839 199h2M840 226h2M843 163h2M843 316h2M844 108h2M844 181h2M844 320h2M844 367h2M845 24h2M845 32h2M845 489h2M847 61h2M847 101h2M848 128h2M848 360h2M850 398h2M852 205h2M852 414h2M856 202h2M856 477h2M857 202h2M859 232h2M859 420h2M861 328h2M864 29h2M864 56h2M865 388h2M867 42h2M867 221h2M867 297h2M868 46h2M869 281h2M871 297h2M872 386h2M874 264h2M875 85h2M875 95h2M875 105h2M875 379h2M876 150h2M877 277h2M877 362h2M877 379h2M878 106h2M879 111h2M879 182h2M880 131h2M880 492h2M881 59h2M882 85h2M883 55h2M883 286h2M886 60h2M887 357h2M888 77h2M889 24h2M889 343h2M890 207h2M897 287h2M900 187h2M901 232h2M901 266h2M902 131h2M903 45h2M905 263h2M905 373h2M907 118h2M907 187h2M908 323h2M909 21h2M909 230h2M910 77h2M912 467h2M913 424h2M914 168h2M916 378h2M916 433h2M918 491h2M920 20h2M921 221h2M922 478h2M926 229h2M928 236h2M929 242h2M929 421h2M931 13h2M931 373h2M933 268h2M935 367h2M938 228h2M938 242h2M940 351h2M940 457h2M944 163h2M948 97h2M948 229h2M950 283h2M957 30h2M957 80h2M958 406h2M962 7h2M962 384h2M963 193h2M964 139h2M964 174h2M965 353h2M966 340h2M967 3h2M967 34h2M967 80h2M968 182h2M968 204h2M968 249h2M969 392h2M970 251h2M972 65h2M976 329h2M978 113h2M978 410h2M981 300h2M982 94h2M983 285h2M983 469h2M988 407h2M988 432h2M989 462h2M991 158h2M993 411h2M993 415h2M995 473h2M996 97h2M996 479h2M997 0h2M997 478h2M1000 471h2M1001 470h2M1004 333h2M1006 50h2M1012 218h2M1013 147h2M1019 178h2M1020 168h2M1020 202h2M1020 306h2M1021 74h2M1022 373h2M1023 56h2M1024 150h2M1026 103h2M1026 137h2M1027 53h2M1029 51h2M1029 390h2M1031 202h2M1032 298h2M1036 384h2M1038 153h2M1042 249h2M1043 443h2M1053 238h2M1054 466h2M1057 202h2M1063 104h2M1066 347h2M1068 325h2M1068 483h2M1070 235h2M1073 323h2M1073 357h2M1075 182h2M1075 290h2M1076 188h2M1077 77h2M1077 452h2M1078 203h2M1080 349h2M1082 485h2M1085 154h2M1085 185h2M1089 110h2M1089 328h2M1092 373h2M1094 146h2M1094 483h2" stroke="#5a5a58"/><path d="M2 136h2M5 283h2M7 314h2M11 233h2M11 235h2M14 346h2M15 54h2M15 145h2M15 246h2M15 272h2M16 261h2M16 283h2M16 284h2M17 43h2M20 79h2M20 202h2M22 159h2M22 265h2M23 281h2M24 3h2M25 193h2M27 119h2M27 330h2M28 163h2M29 295h2M32 414h2M33 305h2M34 431h2M36 132h2M36 289h2M36 335h2M37 126h2M38 37h2M38 207h2M38 224h2M39 239h2M40 55h2M40 325h2M42 105h2M43 14h2M43 42h2M44 117h2M44 247h2M45 147h2M47 193h2M47 202h2M49 191h2M49 342h2M49 459h2M50 230h2M50 477h2M51 184h2M51 221h2M53 265h2M53 375h2M55 441h2M57 214h2M59 94h2M59 201h2M63 184h2M63 296h2M66 475h2M68 199h2M68 244h2M70 354h2M70 440h2M74 464h2M76 61h2M76 219h2M76 391h2M77 103h2M78 360h2M79 88h2M79 311h2M81 472h2M82 346h2M84 180h2M85 282h2M86 110h2M86 171h2M87 179h2M90 314h2M91 435h2M94 418h2M94 420h2M94 456h2M98 56h2M98 315h2M99 201h2M99 249h2M103 260h2M106 432h2M113 331h2M114 243h2M120 221h2M122 208h2M124 179h2M126 482h2M128 490h2M129 312h2M131 31h2M131 159h2M133 61h2M134 247h2M134 330h2M135 43h2M135 252h2M137 278h2M137 438h2M138 132h2M139 348h2M144 154h2M145 54h2M145 154h2M145 273h2M150 310h2M152 78h2M152 107h2M152 381h2M155 292h2M156 139h2M157 483h2M158 33h2M160 359h2M163 273h2M164 383h2M165 294h2M168 462h2M169 324h2M170 89h2M170 232h2M170 287h2M170 421h2M171 202h2M172 285h2M173 389h2M174 133h2M174 190h2M175 106h2M175 192h2M176 291h2M178 154h2M179 51h2M182 178h2M182 240h2M182 320h2M183 207h2M185 458h2M185 470h2M186 153h2M186 232h2M186 439h2M187 111h2M188 374h2M189 152h2M189 226h2M190 106h2M190 345h2M191 387h2M192 216h2M193 29h2M193 148h2M193 344h2M194 173h2M195 139h2M195 249h2M197 168h2M197 274h2M198 224h2M200 255h2M200 405h2M201 72h2M201 347h2M202 90h2M202 160h2M202 229h2M203 167h2M205 165h2M205 473h2M208 119h2M208 218h2M210 222h2M210 355h2M211 93h2M211 165h2M212 173h2M212 262h2M213 165h2M214 295h2M215 351h2M216 50h2M218 114h2M218 370h2M219 54h2M221 312h2M222 268h2M223 421h2M224 137h2M225 221h2M227 93h2M228 2h2M229 223h2M229 257h2M229 263h2M229 364h2M229 449h2M230 463h2M231 139h2M232 50h2M233 181h2M233 185h2M233 395h2M233 465h2M234 162h2M235 19h2M235 420h2M236 90h2M236 410h2M236 479h2M237 27h2M237 417h2M238 3h2M238 47h2M240 196h2M241 427h2M242 292h2M244 492h2M245 202h2M245 418h2M246 103h2M246 440h2M248 109h2M248 120h2M249 400h2M250 336h2M251 138h2M251 190h2M252 186h2M253 117h2M253 202h2M254 424h2M256 339h2M257 328h2M258 400h2M259 365h2M260 278h2M260 293h2M261 91h2M262 45h2M262 352h2M263 194h2M263 195h2M264 205h2M264 351h2M265 143h2M265 264h2M265 380h2M265 455h2M266 104h2M266 176h2M267 91h2M267 477h2M268 38h2M268 108h2M268 193h2M268 361h2M269 193h2M271 425h2M272 361h2M273 287h2M275 165h2M276 40h2M276 134h2M276 491h2M277 10h2M277 12h2M277 124h2M278 445h2M279 232h2M279 470h2M280 474h2M282 136h2M284 74h2M284 107h2M285 56h2M287 413h2M288 179h2M288 212h2M289 241h2M290 29h2M290 159h2M291 288h2M291 394h2M291 427h2M292 92h2M292 392h2M293 144h2M295 393h2M298 219h2M299 284h2M300 470h2M305 44h2M305 257h2M307 2h2M307 298h2M308 64h2M308 324h2M308 414h2M308 417h2M309 415h2M314 493h2M315 97h2M316 162h2M316 481h2M317 225h2M318 10h2M319 99h2M320 206h2M320 450h2M322 462h2M323 343h2M325 406h2M326 378h2M330 389h2M331 295h2M331 407h2M333 316h2M334 392h2M337 384h2M340 50h2M341 209h2M341 419h2M342 71h2M342 275h2M343 6h2M343 251h2M344 33h2M344 229h2M344 392h2M346 213h2M347 134h2M347 137h2M347 307h2M347 435h2M348 151h2M349 0h2M349 232h2M350 141h2M350 432h2M351 25h2M351 128h2M351 195h2M352 165h2M352 204h2M352 252h2M352 296h2M353 168h2M353 287h2M354 100h2M355 126h2M355 315h2M357 280h2M357 418h2M357 425h2M358 462h2M359 54h2M360 368h2M361 407h2M362 161h2M362 188h2M362 203h2M363 332h2M364 248h2M365 75h2M365 492h2M366 178h2M366 391h2M367 71h2M368 285h2M369 275h2M370 69h2M370 97h2M370 200h2M370 476h2M371 155h2M372 352h2M372 489h2M373 217h2M373 478h2M374 313h2M375 193h2M375 202h2M376 289h2M378 97h2M379 223h2M379 347h2M380 145h2M380 440h2M382 265h2M382 281h2M383 69h2M384 179h2M386 67h2M387 203h2M387 472h2M388 82h2M389 6h2M390 49h2M390 147h2M390 289h2M391 189h2M391 248h2M392 209h2M392 212h2M393 339h2M394 121h2M395 163h2M395 266h2M395 297h2M395 309h2M396 128h2M398 5h2M398 359h2M399 337h2M400 177h2M401 204h2M401 271h2M402 6h2M402 156h2M402 266h2M404 222h2M405 466h2M406 55h2M407 97h2M407 327h2M408 236h2M408 385h2M409 202h2M411 218h2M413 133h2M413 277h2M414 327h2M415 56h2M416 218h2M416 261h2M417 211h2M420 489h2M422 103h2M423 331h2M425 363h2M425 396h2M426 56h2M426 399h2M427 252h2M429 286h2M431 117h2M432 57h2M433 353h2M435 397h2M436 9h2M436 84h2M436 311h2M437 41h2M439 285h2M440 229h2M441 431h2M443 8h2M443 190h2M443 334h2M444 72h2M444 335h2M444 349h2M444 478h2M445 224h2M447 116h2M447 327h2M449 323h2M450 150h2M451 130h2M451 177h2M451 287h2M452 164h2M452 257h2M452 292h2M452 297h2M453 105h2M454 128h2M455 17h2M456 171h2M456 232h2M456 472h2M457 314h2M458 220h2M458 284h2M458 481h2M459 327h2M460 260h2M461 104h2M461 365h2M462 100h2M464 402h2M465 111h2M465 387h2M465 405h2M466 273h2M467 253h2M472 178h2M472 212h2M472 358h2M474 366h2M477 38h2M478 196h2M479 287h2M479 348h2M480 198h2M480 339h2M481 332h2M482 224h2M483 83h2M484 191h2M485 492h2M486 292h2M490 82h2M494 152h2M494 275h2M495 126h2M496 295h2M497 48h2M498 213h2M498 461h2M499 228h2M500 327h2M502 91h2M503 7h2M503 184h2M504 181h2M506 470h2M507 250h2M507 313h2M508 217h2M508 444h2M509 90h2M509 150h2M509 419h2M510 363h2M511 363h2M512 394h2M513 185h2M513 252h2M514 72h2M514 163h2M514 469h2M515 234h2M517 175h2M517 214h2M518 154h2M518 473h2M519 35h2M520 83h2M521 56h2M522 97h2M523 466h2M526 290h2M530 337h2M531 185h2M532 17h2M532 57h2M532 144h2M532 290h2M533 223h2M533 334h2M534 149h2M534 216h2M534 269h2M535 109h2M537 222h2M539 291h2M540 336h2M540 490h2M542 82h2M542 139h2M542 289h2M546 17h2M546 97h2M546 115h2M547 155h2M547 396h2M549 260h2M550 298h2M551 79h2M551 204h2M555 243h2M556 332h2M557 286h2M558 25h2M558 176h2M560 60h2M560 72h2M561 214h2M563 275h2M563 348h2M567 3h2M567 325h2M568 87h2M568 228h2M570 86h2M573 40h2M575 11h2M575 456h2M576 131h2M577 16h2M578 61h2M578 206h2M578 270h2M579 78h2M580 46h2M580 348h2M580 360h2M580 376h2M581 384h2M582 237h2M582 341h2M583 81h2M584 317h2M585 400h2M586 368h2M586 376h2M586 481h2M587 23h2M591 228h2M591 467h2M593 114h2M594 309h2M595 127h2M595 492h2M598 171h2M598 214h2M598 233h2M601 80h2M602 150h2M602 369h2M603 97h2M603 105h2M603 134h2M606 331h2M607 154h2M607 197h2M608 98h2M609 297h2M612 165h2M613 276h2M614 175h2M617 226h2M619 179h2M620 21h2M620 361h2M622 157h2M622 272h2M622 415h2M623 32h2M623 47h2M623 58h2M624 86h2M624 166h2M625 130h2M625 220h2M627 84h2M627 367h2M628 142h2M628 261h2M629 426h2M633 350h2M635 437h2M638 97h2M639 198h2M641 321h2M641 357h2M643 432h2M647 108h2M649 40h2M650 366h2M651 404h2M653 322h2M653 462h2M654 182h2M654 339h2M654 469h2M655 133h2M658 133h2M662 48h2M664 94h2M664 196h2M668 225h2M668 322h2M672 85h2M675 134h2M675 147h2M676 457h2M677 138h2M679 304h2M680 242h2M682 485h2M683 4h2M683 65h2M688 138h2M689 199h2M689 353h2M692 295h2M699 9h2M700 70h2M700 235h2M700 374h2M702 337h2M704 14h2M704 297h2M704 302h2M705 403h2M706 442h2M708 174h2M710 162h2M711 9h2M711 52h2M711 113h2M712 52h2M713 39h2M713 251h2M714 323h2M715 356h2M715 401h2M715 412h2M716 88h2M718 267h2M719 367h2M719 400h2M720 386h2M721 153h2M722 25h2M722 281h2M724 1h2M724 465h2M725 225h2M725 231h2M726 122h2M727 226h2M728 306h2M728 364h2M728 428h2M729 270h2M729 441h2M730 432h2M731 438h2M732 200h2M732 316h2M733 112h2M733 417h2M735 2h2M736 419h2M738 478h2M739 407h2M740 31h2M740 465h2M741 350h2M745 25h2M745 348h2M745 393h2M748 227h2M749 98h2M750 272h2M750 402h2M756 125h2M756 288h2M759 139h2M760 254h2M762 366h2M764 332h2M765 349h2M767 148h2M770 120h2M770 194h2M772 142h2M773 87h2M773 448h2M774 403h2M776 120h2M777 39h2M778 97h2M778 469h2M784 128h2M788 106h2M788 140h2M789 483h2M791 330h2M792 279h2M792 390h2M796 402h2M797 50h2M800 61h2M800 264h2M803 113h2M807 365h2M809 320h2M810 173h2M814 124h2M821 245h2M821 415h2M823 261h2M823 432h2M827 52h2M828 464h2M829 352h2M830 323h2M831 166h2M831 324h2M834 132h2M835 197h2M838 28h2M840 327h2M841 78h2M842 251h2M847 10h2M850 59h2M852 377h2M853 193h2M854 314h2M855 257h2M856 278h2M859 273h2M859 421h2M861 113h2M861 390h2M862 284h2M862 312h2M863 440h2M864 28h2M866 117h2M866 281h2M866 482h2M867 119h2M870 386h2M872 72h2M872 306h2M873 414h2M876 120h2M877 363h2M882 207h2M882 492h2M885 221h2M886 395h2M889 308h2M891 359h2M892 149h2M893 166h2M894 24h2M896 136h2M901 203h2M902 254h2M903 72h2M905 467h2M907 117h2M907 323h2M910 80h2M910 162h2M912 314h2M912 410h2M913 261h2M914 459h2M917 407h2M918 103h2M920 0h2M920 96h2M920 438h2M924 374h2M925 9h2M932 20h2M932 400h2M939 320h2M941 198h2M943 150h2M945 462h2M947 91h2M952 255h2M954 305h2M956 396h2M957 21h2M957 422h2M959 359h2M960 13h2M960 357h2M963 24h2M965 352h2M966 101h2M969 113h2M971 195h2M971 451h2M974 161h2M975 375h2M978 59h2M979 31h2M983 45h2M985 9h2M986 341h2M1000 231h2M1011 409h2M1015 329h2M1016 401h2M1018 369h2M1019 72h2M1020 164h2M1030 146h2M1030 343h2M1032 433h2M1037 1h2M1040 103h2M1042 73h2M1043 144h2M1046 49h2M1048 11h2M1048 196h2M1048 421h2M1051 373h2M1052 103h2M1057 221h2M1058 370h2M1066 181h2M1069 172h2M1072 438h2M1073 196h2M1073 452h2M1077 372h2M1084 457h2M1086 50h2M1086 75h2M1086 219h2M1086 263h2M1091 291h2" stroke="#4e4e4c"/><path d="M3 171h2M20 163h2M24 315h2M29 125h2M32 153h2M40 50h2M40 67h2M42 259h2M43 408h2M46 486h2M50 449h2M57 154h2M75 322h2M78 296h2M78 488h2M84 175h2M85 217h2M88 53h2M92 452h2M94 371h2M99 394h2M107 261h2M108 468h2M110 314h2M112 156h2M112 265h2M114 301h2M126 59h2M129 347h2M130 187h2M140 123h2M147 246h2M150 3h2M155 210h2M158 63h2M161 106h2M166 436h2M172 77h2M174 285h2M182 147h2M184 344h2M186 129h2M190 385h2M192 257h2M193 112h2M196 11h2M198 28h2M208 183h2M210 424h2M220 300h2M221 183h2M228 424h2M232 270h2M234 204h2M235 184h2M240 72h2M244 479h2M247 270h2M251 296h2M252 107h2M253 223h2M257 309h2M265 477h2M267 158h2M269 121h2M274 439h2M275 313h2M284 317h2M284 478h2M289 168h2M290 90h2M293 376h2M297 112h2M302 397h2M304 360h2M304 435h2M312 326h2M313 398h2M314 85h2M317 94h2M323 31h2M323 48h2M324 88h2M324 375h2M325 52h2M327 124h2M334 116h2M334 195h2M334 450h2M337 324h2M338 216h2M339 67h2M340 153h2M341 35h2M342 79h2M342 151h2M344 136h2M350 490h2M353 332h2M354 187h2M360 458h2M361 48h2M361 128h2M361 152h2M364 193h2M366 68h2M369 448h2M373 176h2M375 254h2M376 367h2M380 304h2M381 241h2M381 266h2M382 44h2M383 212h2M389 306h2M395 29h2M398 162h2M398 343h2M401 478h2M403 28h2M407 41h2M411 312h2M419 349h2M420 234h2M422 211h2M426 436h2M430 165h2M431 11h2M439 212h2M441 437h2M447 254h2M450 134h2M451 8h2M453 159h2M453 436h2M462 56h2M463 396h2M464 448h2M465 35h2M467 252h2M468 479h2M476 323h2M477 12h2M478 204h2M483 259h2M487 317h2M488 251h2M490 30h2M492 100h2M493 356h2M496 482h2M499 469h2M509 280h2M510 362h2M516 440h2M520 201h2M521 366h2M530 134h2M534 381h2M540 155h2M545 230h2M546 31h2M556 337h2M560 386h2M564 212h2M565 174h2M569 174h2M569 291h2M570 217h2M574 110h2M583 294h2M585 179h2M592 460h2M595 292h2M595 455h2M599 94h2M609 233h2M612 259h2M613 110h2M618 275h2M620 149h2M620 420h2M622 19h2M623 69h2M626 192h2M627 445h2M629 119h2M635 119h2M639 118h2M641 352h2M643 464h2M645 113h2M654 234h2M661 235h2M661 262h2M663 467h2M666 311h2M671 485h2M673 113h2M675 428h2M676 274h2M682 486h2M691 198h2M691 292h2M691 315h2M696 86h2M698 112h2M700 270h2M702 352h2M702 479h2M703 37h2M706 459h2M708 428h2M713 171h2M719 307h2M737 189h2M741 481h2M748 434h2M761 368h2M762 275h2M763 154h2M774 299h2M782 88h2M786 338h2M791 78h2M794 292h2M798 242h2M799 471h2M803 152h2M804 117h2M806 178h2M816 78h2M820 240h2M837 472h2M842 372h2M852 93h2M856 14h2M858 20h2M862 326h2M871 296h2M882 80h2M882 106h2M900 40h2M906 134h2M907 61h2M910 436h2M925 417h2M930 282h2M958 83h2M959 340h2M965 291h2M967 330h2M972 192h2M974 370h2M980 406h2M986 310h2M988 203h2M995 403h2M996 18h2M1010 443h2M1013 202h2M1015 493h2M1024 81h2M1033 483h2M1035 424h2M1039 42h2M1063 455h2M1066 67h2M1073 337h2" stroke="#6e694f"/><path d="M6 173h2M9 320h2M13 158h2M16 378h2M17 8h2M18 52h2M19 98h2M29 166h2M31 54h2M31 399h2M33 26h2M35 76h2M40 202h2M48 426h2M51 258h2M53 329h2M60 39h2M64 95h2M65 182h2M66 202h2M66 265h2M67 329h2M69 455h2M71 425h2M72 339h2M76 332h2M81 156h2M81 174h2M82 285h2M89 110h2M93 298h2M93 322h2M100 186h2M106 200h2M107 17h2M111 348h2M113 455h2M124 329h2M126 110h2M127 147h2M130 36h2M130 310h2M131 314h2M135 431h2M139 252h2M140 250h2M153 99h2M156 2h2M158 206h2M158 377h2M159 3h2M162 90h2M163 219h2M164 362h2M165 66h2M166 150h2M171 96h2M172 280h2M176 247h2M177 17h2M179 67h2M179 172h2M184 69h2M185 92h2M188 103h2M189 191h2M190 457h2M191 25h2M191 419h2M192 13h2M192 146h2M193 114h2M194 54h2M195 5h2M198 174h2M198 256h2M202 28h2M205 107h2M206 219h2M208 130h2M210 67h2M213 65h2M213 347h2M214 346h2M218 307h2M219 403h2M220 284h2M221 64h2M221 158h2M223 84h2M224 250h2M226 22h2M226 133h2M227 253h2M228 468h2M232 252h2M233 20h2M234 176h2M235 391h2M238 127h2M239 305h2M240 227h2M241 175h2M241 438h2M245 70h2M246 31h2M246 387h2M247 144h2M247 346h2M248 77h2M249 59h2M250 322h2M251 399h2M252 302h2M254 54h2M254 209h2M254 221h2M254 452h2M257 304h2M260 35h2M262 183h2M262 243h2M264 92h2M265 476h2M266 5h2M266 68h2M266 300h2M271 302h2M273 86h2M274 76h2M275 291h2M276 300h2M277 57h2M277 71h2M277 78h2M279 92h2M280 5h2M280 28h2M285 489h2M286 191h2M287 394h2M290 100h2M292 174h2M292 451h2M293 40h2M293 340h2M293 362h2M295 423h2M299 234h2M299 332h2M301 347h2M303 283h2M303 399h2M304 297h2M306 453h2M307 112h2M309 191h2M313 110h2M316 93h2M318 112h2M318 310h2M325 45h2M329 419h2M334 163h2M337 250h2M338 445h2M340 20h2M340 216h2M343 359h2M347 56h2M347 83h2M347 96h2M353 73h2M353 492h2M355 189h2M356 277h2M357 189h2M360 42h2M360 146h2M360 381h2M365 107h2M365 327h2M367 376h2M369 294h2M372 123h2M373 231h2M377 484h2M378 344h2M380 146h2M380 276h2M384 266h2M385 112h2M385 453h2M387 279h2M391 378h2M392 198h2M393 414h2M394 61h2M394 94h2M394 375h2M395 358h2M400 137h2M404 311h2M405 354h2M410 228h2M413 4h2M415 141h2M417 57h2M422 77h2M424 115h2M426 235h2M427 211h2M428 464h2M429 421h2M431 342h2M431 488h2M434 154h2M434 271h2M434 288h2M437 384h2M438 171h2M438 418h2M439 325h2M441 28h2M442 264h2M444 113h2M444 224h2M445 477h2M446 27h2M446 89h2M446 454h2M448 70h2M448 101h2M450 93h2M450 451h2M451 403h2M452 259h2M452 345h2M453 56h2M453 101h2M453 194h2M453 200h2M454 48h2M454 52h2M454 300h2M454 365h2M455 278h2M457 37h2M458 27h2M458 39h2M458 261h2M459 325h2M460 156h2M461 416h2M461 451h2M464 235h2M465 237h2M465 307h2M467 156h2M467 179h2M468 339h2M470 100h2M470 488h2M471 236h2M472 14h2M473 328h2M474 99h2M474 206h2M475 350h2M477 49h2M478 81h2M478 92h2M482 414h2M484 250h2M484 334h2M485 203h2M485 411h2M487 247h2M487 357h2M488 45h2M488 405h2M490 43h2M490 315h2M493 268h2M497 185h2M497 242h2M498 233h2M499 74h2M499 429h2M503 423h2M503 464h2M506 101h2M507 53h2M508 159h2M510 415h2M510 420h2M513 479h2M515 466h2M517 185h2M518 240h2M518 360h2M519 58h2M519 94h2M521 262h2M522 258h2M527 9h2M530 96h2M530 289h2M533 142h2M533 172h2M534 210h2M536 423h2M537 102h2M537 140h2M540 265h2M541 404h2M542 310h2M545 467h2M548 357h2M549 33h2M550 474h2M550 482h2M552 280h2M556 224h2M557 185h2M558 87h2M558 381h2M564 268h2M568 483h2M570 38h2M572 263h2M572 449h2M574 179h2M575 199h2M576 412h2M578 225h2M585 69h2M586 56h2M587 31h2M587 265h2M590 427h2M596 21h2M596 198h2M597 349h2M600 379h2M600 470h2M605 335h2M606 334h2M609 452h2M611 263h2M612 57h2M612 391h2M613 396h2M614 66h2M617 167h2M618 279h2M618 419h2M619 137h2M619 447h2M623 85h2M625 25h2M626 54h2M626 259h2M631 401h2M634 207h2M637 308h2M638 47h2M641 325h2M643 356h2M644 439h2M651 288h2M656 394h2M659 75h2M659 382h2M664 269h2M665 268h2M668 77h2M668 100h2M669 174h2M669 348h2M669 359h2M670 249h2M673 242h2M676 250h2M678 163h2M681 314h2M682 96h2M682 192h2M682 379h2M684 209h2M684 357h2M687 43h2M687 171h2M692 422h2M696 250h2M697 2h2M698 21h2M698 220h2M699 113h2M700 397h2M701 311h2M703 279h2M706 50h2M707 300h2M712 137h2M712 409h2M713 493h2M722 342h2M727 37h2M727 75h2M727 306h2M727 478h2M728 207h2M732 68h2M736 86h2M738 165h2M740 236h2M741 20h2M746 51h2M747 29h2M750 93h2M750 461h2M752 33h2M752 487h2M753 473h2M756 224h2M771 89h2M775 354h2M783 368h2M786 375h2M791 34h2M791 204h2M795 229h2M795 458h2M799 97h2M805 294h2M809 109h2M810 327h2M810 427h2M812 268h2M812 353h2M813 29h2M817 131h2M821 256h2M824 199h2M824 384h2M835 278h2M847 458h2M853 222h2M856 166h2M858 97h2M859 444h2M865 154h2M866 9h2M874 4h2M874 183h2M877 253h2M879 141h2M879 212h2M886 3h2M886 234h2M891 156h2M892 170h2M894 416h2M896 423h2M902 80h2M909 418h2M914 36h2M916 292h2M920 463h2M921 169h2M922 146h2M923 140h2M924 306h2M934 435h2M937 139h2M942 258h2M942 450h2M952 352h2M957 282h2M968 247h2M979 133h2M982 111h2M982 487h2M986 364h2M1002 317h2M1005 34h2M1007 428h2M1007 475h2M1008 20h2M1017 323h2M1019 214h2M1027 264h2M1034 458h2M1035 449h2M1042 427h2M1045 438h2M1049 418h2M1053 334h2M1053 356h2M1079 453h2M1081 7h2M1083 209h2M1091 118h2" stroke="#70706e"/><path d="M17 362h2M21 337h2M31 251h2M36 207h2M37 162h2M73 145h2M76 16h2M103 245h2M110 132h2M112 352h2M117 294h2M131 375h2M137 365h2M137 386h2M149 66h2M154 194h2M167 146h2M180 490h2M181 438h2M182 252h2M194 375h2M202 260h2M203 244h2M204 179h2M204 184h2M207 324h2M219 230h2M220 416h2M222 390h2M224 395h2M231 148h2M238 252h2M239 289h2M241 347h2M256 26h2M261 186h2M271 132h2M273 239h2M273 315h2M274 396h2M275 366h2M275 470h2M284 52h2M287 52h2M299 179h2M303 489h2M305 91h2M310 361h2M311 147h2M313 444h2M314 439h2M328 476h2M329 483h2M331 341h2M342 267h2M347 32h2M348 472h2M352 184h2M359 163h2M365 146h2M379 437h2M383 254h2M384 264h2M390 323h2M394 451h2M396 95h2M397 316h2M401 101h2M401 209h2M403 144h2M406 163h2M412 56h2M419 162h2M420 10h2M428 399h2M430 354h2M432 364h2M441 428h2M443 193h2M446 360h2M447 28h2M451 269h2M462 75h2M466 237h2M470 214h2M472 78h2M473 59h2M473 266h2M474 338h2M488 314h2M493 188h2M521 151h2M524 144h2M528 65h2M529 196h2M537 220h2M537 239h2M547 246h2M549 59h2M555 61h2M557 74h2M558 314h2M559 207h2M566 98h2M568 440h2M575 392h2M576 78h2M582 469h2M583 359h2M589 80h2M590 241h2M591 95h2M606 159h2M616 378h2M627 273h2M629 250h2M666 281h2M673 403h2M682 18h2M692 23h2M693 231h2M701 83h2M710 114h2M733 310h2M734 366h2M738 63h2M747 81h2M748 10h2M749 125h2M759 252h2M761 421h2M763 115h2M771 433h2M778 293h2M795 199h2M800 124h2M825 67h2M845 84h2M853 285h2M865 481h2M902 474h2M903 272h2M922 215h2M932 219h2M946 306h2M976 360h2M995 147h2M1015 483h2M1016 294h2M1031 471h2M1036 409h2M1051 217h2M1059 457h2M1075 223h2M1078 293h2" stroke="#546a72"/><path d="M26 412h2M31 243h2M70 74h2M70 111h2M118 226h2M130 107h2M155 226h2M272 164h2M274 97h2M275 254h2M284 303h2M304 207h2M306 283h2M306 317h2M309 330h2M319 357h2M331 248h2M334 18h2M351 90h2M393 207h2M394 43h2M411 468h2M428 63h2M467 130h2M485 39h2M550 195h2M566 12h2M571 103h2M575 375h2M585 27h2M610 428h2M628 138h2M654 212h2M659 104h2M661 243h2M675 133h2M676 90h2M680 314h2M683 29h2M756 62h2M788 192h2M865 266h2M867 447h2M880 8h2M890 21h2M915 321h2M934 93h2M1027 283h2M1028 399h2M1081 95h2" stroke="#848484"/></g><path d="M773.1 365.9L1289.9 446.2M757.5 369.1L1285.6 454.9M741.0 372.4L1281.0 464.3M723.7 375.9L1275.9 474.6M705.5 379.6L1270.3 485.9M686.2 383.6L1264.2 498.3M665.8 387.7L1257.4 512.0M644.2 392.1L1249.8 527.3M621.3 396.8L1241.4 544.4M596.9 401.7L1231.9 563.7M571.0 407.0L1221.1 585.6M543.2 412.7L1208.7 610.7M513.6 418.7L1194.4 639.7M481.8 425.2L1177.7 673.6M447.6 432.1L1157.8 713.7M410.7 439.6L1133.9 762.1M370.8 447.7L1104.6 821.6M327.5 456.5L1067.7 896.2M280.5 466.1L1020.0 992.9M229.0 476.6L955.8 1122.9M172.6 488.1L864.8 1307.3M110.4 500.7L725.7 1589.0M41.5 514.8L486.9 2072.8M-35.2 530.4L-19.0 3097.4M-121.1 547.8L-1807.6 6720.2M773.1 365.9L-121.1 547.8M781.1 367.1L-123.2 555.4M789.2 368.4L-125.3 563.2M797.5 369.7L-127.6 571.5M805.9 371.0L-130.0 580.3M814.6 372.3L-132.5 589.5M823.4 373.7L-135.1 599.2M832.4 375.1L-137.9 609.4M841.5 376.5L-140.9 620.3M850.9 378.0L-144.1 631.8M860.5 379.5L-147.4 644.1M870.3 381.0L-151.0 657.1M880.3 382.5L-154.8 671.0M890.5 384.1L-158.8 685.9M901.0 385.7L-163.2 701.8M911.7 387.4L-167.9 718.9M922.6 389.1L-172.9 737.3M933.8 390.9L-178.3 757.2M945.3 392.6L-184.2 778.8M957.0 394.5L-190.6 802.2M969.0 396.3L-197.6 827.8M981.3 398.2L-205.2 855.8M993.9 400.2L-213.7 886.6M1006.9 402.2L-223.0 920.6M1020.1 404.3L-233.3 958.4M1033.7 406.4L-244.8 1000.7M1047.7 408.6L-257.8 1048.3M1062.0 410.8L-272.6 1102.2M1076.7 413.1L-289.4 1163.8M1091.9 415.4L-308.8 1234.8M1107.4 417.8L-331.5 1317.8M1123.3 420.3L-358.3 1415.8M1139.8 422.9L-390.4 1533.4M1156.6 425.5L-429.7 1677.2M1174.0 428.2L-478.8 1857.0M1191.9 431.0L-542.0 2088.2M1210.3 433.8L-626.2 2396.5M1229.3 436.8L-744.2 2828.2M1248.9 439.8L-921.2 3476.0M1269.1 443.0L-1216.4 4556.5M1289.9 446.2L-1807.6 6720.2" stroke="#e4e4e4" stroke-width="1" fill="none" shape-rendering="crispEdges"/><g shape-rendering="crispEdges"><polygon points="481.7,328.2 558.8,321.7 642.7,313.3 665.0,311.2 710.4,305.6 733.1,301.0 752.4,295.9 759.2,297.6 763.8,302.2 764.9,306.7 771.2,310.7 775.7,313.7 774.0,320.3 767.2,323.2 761.5,328.3 747.9,332.3 719.5,333.4 676.2,338.5 642.7,346.0 586.8,359.5 530.9,372.0 481.7,383.2" fill="#0078ff"/><polygon points="753.0,334.2 753.0,335.8 712.7,337.0 687.7,337.6 675.0,337.6 687.7,336.2 712.7,335.4" fill="#0068e0"/><path d="M629.0 318.8L771.0 312.6M657.0 321.6L767.0 316.4" stroke="#0066dc" stroke-width="1.4" fill="none"/><path d="M615.0 316.6L764.0 304.6M675.0 311.2L761.0 300.4M705.0 310.5L765.0 308.0" stroke="#006ce8" stroke-width="1" fill="none"/><polygon points="429.1,312.5 481.7,319.9 481.7,402.5 429.1,386.1" fill="#c800c8"/><polygon points="187.0,354.9 208.5,352.1 250.5,347.7 270.0,347.1 295.2,348.8 323.1,350.7 337.1,349.9 353.9,344.9 379.0,338.2 404.2,332.6 429.1,330.6 444.2,330.3 445.3,332.6 463.2,333.7 465.5,334.6 467.4,337.0 468.2,340.0 469.2,344.0 469.2,346.0 468.8,348.0 469.2,351.0 467.4,354.0 469.2,358.0 468.8,362.0 467.4,365.0 469.2,368.0 466.6,372.0 467.4,374.0 468.2,376.0 468.2,378.0 469.2,382.0 468.0,384.0 466.6,386.8 447.6,391.9 426.5,395.2 398.6,398.8 370.6,401.6 348.3,404.4 331.5,410.8 309.2,419.8 286.8,427.6 267.2,432.3 230.9,438.8 211.3,442.1 187.0,425.4" fill="#0078ff"/><path d="M356 345Q347 374 356 403M412 333Q408 364 413 397M432 332Q430 362 433 394" stroke="#0a6ee6" stroke-width="1" fill="none" stroke-dasharray="3 2"/></g></svg></div>
<svg width="1145" height="1073" viewBox="0 0 1145 1073" style="left:0;top:0"><path d="M1056.6 18.2L1060.6 14.2L1064.6 18.2" stroke="#7b7b7b" stroke-width="2.2" fill="none"/><rect x="1079" y="18" width="9" height="2" fill="#7b7b7b"/><rect x="1103" y="12" width="7" height="7" fill="none" stroke="#7b7b7b" stroke-width="1.8"/><path d="M1125.6 11.6L1133.4 19.4M1133.4 11.6L1125.6 19.4" stroke="#7b7b7b" stroke-width="2.2" fill="none"/><g><rect x="6.5" y="8.5" width="9.2" height="11" fill="#e2e2e2" stroke="#6e6e6e" stroke-width="1"/><rect x="16.3" y="8.5" width="9.2" height="11" fill="#e2e2e2" stroke="#6e6e6e" stroke-width="1"/><path d="M8.6 10v8" stroke="#f4f4f4" stroke-width="1.4"/><path d="M10.6 10v8" stroke="#d8a8a0"/><path d="M12.2 10v8" stroke="#a0d8a8"/><path d="M13.8 10v8" stroke="#8a8a8a"/><path d="M18 10v8" stroke="#e0a0d8"/><path d="M19.8 10v8" stroke="#f4f4f4" stroke-width="1.4"/><path d="M21.6 10v8" stroke="#9aa4cc"/><path d="M23.4 10v8" stroke="#f0f0f0" stroke-width="1.2"/></g><defs><filter id="bl1" x="-10%" y="-10%" width="120%" height="120%"><feGaussianBlur stdDeviation="0.45"/></filter></defs><path d="M43.7 117.1L76.1 140L57.7 137.6L50.9 156.3Z" fill="#060606" filter="url(#bl1)"/><circle cx="117.2" cy="134.7" r="13.1" fill="none" stroke="#000" stroke-width="5.2"/><path d="M126.8 144.6L135.6 153.6" stroke="#000" stroke-width="5.6" stroke-linecap="round"/><path d="M170.9 125.6H166.9L173.0 118.39999999999999L179.1 125.6H175.1V137.7H170.9Z" fill="#000" stroke="#000" stroke-width="1.5" stroke-linejoin="round" transform="rotate(0 173.0 137.7)"/><path d="M170.9 125.6H166.9L173.0 118.39999999999999L179.1 125.6H175.1V137.7H170.9Z" fill="#000" stroke="#000" stroke-width="1.5" stroke-linejoin="round" transform="rotate(90 173.0 137.7)"/><path d="M170.9 125.6H166.9L173.0 118.39999999999999L179.1 125.6H175.1V137.7H170.9Z" fill="#000" stroke="#000" stroke-width="1.5" stroke-linejoin="round" transform="rotate(180 173.0 137.7)"/><path d="M170.9 125.6H166.9L173.0 118.39999999999999L179.1 125.6H175.1V137.7H170.9Z" fill="#000" stroke="#000" stroke-width="1.5" stroke-linejoin="round" transform="rotate(270 173.0 137.7)"/><rect x="170.20000000000002" y="134.9" width="5.6" height="5.6" fill="#000"/><path d="M217.89999999999998 137.4A10.3 2.9 0 0 0 238.5 137.4" fill="none" stroke="#1a1aff" stroke-width="1.3"/><path d="M217.89999999999998 137.4A10.3 2.9 0 0 1 225.60 134.59M230.80 134.59A10.3 2.9 0 0 1 238.5 137.4" fill="none" stroke="#1a1aff" stroke-width="1.3"/><path d="M232.5 133.3L238.7 135.8L234.6 137.3Z" fill="#1a1aff"/><path d="M228.2 127.69999999999999V151.8" stroke="#111" stroke-width="1.25" fill="none"/><path d="M228.2 121.5L231.1 130.2L228.2 128.6L225.29999999999998 130.2Z" fill="#0c0c0c"/><path d="M288.3 136.8L288.30 116.30A20.5 20.5 0 0 1 306.14 126.71Z" fill="#0b5fa8"/><path d="M288.3 136.8L306.05 126.55A20.5 20.5 0 0 1 305.96 147.20Z" fill="#0a7fe0"/><path d="M288.3 136.8L306.05 147.05A20.5 20.5 0 0 1 288.12 157.30Z" fill="#4cd964"/><path d="M288.3 136.8L288.30 157.30A20.5 20.5 0 0 1 270.46 146.89Z" fill="#ffd60a"/><path d="M288.3 136.8L270.55 147.05A20.5 20.5 0 0 1 270.64 126.40Z" fill="#ff9500"/><path d="M288.3 136.8L270.55 126.55A20.5 20.5 0 0 1 288.48 116.30Z" fill="#ff4450"/><path d="M288.3 136.8L288.30 124.20A12.6 12.6 0 0 1 299.27 130.60Z" fill="#0d4f8c"/><path d="M288.3 136.8L299.21 130.50A12.6 12.6 0 0 1 299.16 143.19Z" fill="#0c5fa8"/><path d="M288.3 136.8L299.21 143.10A12.6 12.6 0 0 1 288.19 149.40Z" fill="#0aa858"/><path d="M288.3 136.8L288.30 149.40A12.6 12.6 0 0 1 277.33 143.00Z" fill="#ff9f0a"/><path d="M288.3 136.8L277.39 143.10A12.6 12.6 0 0 1 277.44 130.41Z" fill="#ff4f0a"/><path d="M288.3 136.8L277.39 130.50A12.6 12.6 0 0 1 288.41 124.20Z" fill="#e8084f"/><circle cx="288.3" cy="136.8" r="5.1" fill="#f2f2f2"/><path d="M319 145.8H326.8L322.9 150Z" fill="#4a4a4a"/><rect x="789.3" y="157.1" width="12.8" height="11.6" fill="none" stroke="#8a8a8a" stroke-width="1"/><rect x="804.7" y="157.1" width="12.8" height="11.6" fill="none" stroke="#8a8a8a" stroke-width="1"/><rect x="789.3" y="171.7" width="12.8" height="11.6" fill="none" stroke="#8a8a8a" stroke-width="1"/><rect x="804.7" y="171.7" width="12.8" height="11.6" fill="none" stroke="#8a8a8a" stroke-width="1"/><path d="M866.7 121.7L838.8 134.3L845.8 137L848.5 142.8L851.3 138.5L862 142.4ZM866.7 121.7L845.8 137M866.7 121.7L851.3 138.5" fill="none" stroke="#222" stroke-width="1" stroke-linejoin="round"/><path d="M884.6 133.2A7.8 2.2 0 0 0 900.1999999999999 133.2" fill="none" stroke="#1a1aff" stroke-width="1.0"/><path d="M884.6 133.2A7.8 2.2 0 0 1 890.40 131.07M894.40 131.07A7.8 2.2 0 0 1 900.1999999999999 133.2" fill="none" stroke="#1a1aff" stroke-width="1.0"/><path d="M895.7 129.8L900.4 132.0L897.2 133.1Z" fill="#1a1aff"/><path d="M892.4 125.5V144.3" stroke="#111" stroke-width="1.25" fill="none"/><path d="M892.4 121.2L894.6 128.0L892.4 126.4L890.1999999999999 128.0Z" fill="#0c0c0c"/><rect x="926.8" y="114" width="33.8" height="26.8" fill="#1414ff"/><rect x="928.4" y="119" width="30.6" height="17.1" fill="#efefef"/><rect x="928.90" y="115.5" width="1.9" height="2.1" fill="#fff"/><rect x="928.90" y="137.4" width="1.9" height="2.1" fill="#fff"/><rect x="932.45" y="115.5" width="1.9" height="2.1" fill="#fff"/><rect x="932.45" y="137.4" width="1.9" height="2.1" fill="#fff"/><rect x="936.00" y="115.5" width="1.9" height="2.1" fill="#fff"/><rect x="936.00" y="137.4" width="1.9" height="2.1" fill="#fff"/><rect x="939.55" y="115.5" width="1.9" height="2.1" fill="#fff"/><rect x="939.55" y="137.4" width="1.9" height="2.1" fill="#fff"/><rect x="943.10" y="115.5" width="1.9" height="2.1" fill="#fff"/><rect x="943.10" y="137.4" width="1.9" height="2.1" fill="#fff"/><rect x="946.65" y="115.5" width="1.9" height="2.1" fill="#fff"/><rect x="946.65" y="137.4" width="1.9" height="2.1" fill="#fff"/><rect x="950.20" y="115.5" width="1.9" height="2.1" fill="#fff"/><rect x="950.20" y="137.4" width="1.9" height="2.1" fill="#fff"/><rect x="953.75" y="115.5" width="1.9" height="2.1" fill="#fff"/><rect x="953.75" y="137.4" width="1.9" height="2.1" fill="#fff"/><rect x="957.30" y="115.5" width="1.9" height="2.1" fill="#fff"/><rect x="957.30" y="137.4" width="1.9" height="2.1" fill="#fff"/><path d="M939.9 119.4L948.3 126.2L939.9 133.2Z" fill="#1414ff"/><rect x="1000.2" y="115.5" width="9.7" height="6.9" fill="#ebebf7" stroke="#6262ff" stroke-width="1.5" stroke-opacity="0.8"/><rect x="1000.2" y="127.0" width="9.7" height="6.9" fill="#ebebf7" stroke="#6262ff" stroke-width="1.5" stroke-opacity="0.8"/><rect x="1012.7" y="115.5" width="9.7" height="6.9" fill="#ebebf7" stroke="#6262ff" stroke-width="1.5" stroke-opacity="0.8"/><rect x="1012.7" y="127.0" width="9.7" height="6.9" fill="#ebebf7" stroke="#6262ff" stroke-width="1.5" stroke-opacity="0.8"/><rect x="1025.5" y="115.5" width="9.7" height="6.9" fill="#ebebf7" stroke="#6262ff" stroke-width="1.5" stroke-opacity="0.8"/><rect x="1025.5" y="127.0" width="9.7" height="6.9" fill="#ebebf7" stroke="#6262ff" stroke-width="1.5" stroke-opacity="0.8"/><defs><linearGradient id="pg" x1="0" y1="0" x2="1" y2="0"><stop offset="0" stop-color="#4a4aff"/><stop offset="0.55" stop-color="#2020e8"/><stop offset="1" stop-color="#1010c8"/></linearGradient></defs><path d="M1081.6 121.1L1102.1 135.8L1081.6 150.3Z" fill="url(#pg)"/><defs><linearGradient id="bl" x1="0" y1="0" x2="0" y2="1"><stop offset="0" stop-color="#a9c3ea"/><stop offset="1" stop-color="#6f97d3"/></linearGradient><linearGradient id="gr" x1="0" y1="0" x2="1" y2="1"><stop offset="0" stop-color="#8fd13c"/><stop offset="1" stop-color="#4c9a14"/></linearGradient></defs><defs><linearGradient id="blh" x1="0" y1="0" x2="0" y2="1"><stop offset="0" stop-color="#86a9de"/><stop offset="0.45" stop-color="#b9cff0"/><stop offset="1" stop-color="#7da2da"/></linearGradient></defs><path d="M46.6 846.3H51.6V852.7H58.2V857.7H51.6V863.8H46.6V857.7H40.1V852.7H46.6Z" fill="url(#blh)" stroke="#6a92cf" stroke-width="1"/><rect x="79.4" y="853.3" width="21.2" height="4.8" fill="url(#blh)" stroke="#6a92cf" stroke-width="1"/><ellipse cx="130.6" cy="865" rx="9" ry="1.8" fill="#000" opacity="0.12"/><ellipse cx="171.6" cy="865.5" rx="8" ry="1.5" fill="#000" opacity="0.10"/><path d="M125 842.3H136.6V850.8H141.8L130.6 864.4L119.4 850.8H125Z" fill="url(#gr)" stroke="#3f8410" stroke-width="1" stroke-linejoin="round"/><path d="M171.6 842.3L182.8 856H177.6V864.4H165.6V856H160.4Z" fill="url(#gr)" stroke="#3f8410" stroke-width="1" stroke-linejoin="round"/><path d="M423.6 919.3H431.4L427.5 923.6Z" fill="#4a4a4a"/><path d="M523.4 919.3H531.3L527.3 923.6Z" fill="#4a4a4a"/><rect x="1126" y="1045" width="1" height="1" fill="#a6a6a6"/><rect x="1126" y="1048" width="1" height="1" fill="#a6a6a6"/><rect x="1123" y="1048" width="1" height="1" fill="#a6a6a6"/><rect x="1126" y="1051" width="1" height="1" fill="#a6a6a6"/><rect x="1123" y="1051" width="1" height="1" fill="#a6a6a6"/><rect x="1120" y="1051" width="1" height="1" fill="#a6a6a6"/><rect x="1126" y="1054" width="1" height="1" fill="#a6a6a6"/><rect x="1123" y="1054" width="1" height="1" fill="#a6a6a6"/><rect x="1120" y="1054" width="1" height="1" fill="#a6a6a6"/><rect x="1117" y="1054" width="1" height="1" fill="#a6a6a6"/></svg>
<div id="txt"><span class="t" style="left:425.40px;top:9.02px;font-size:13.5px;letter-spacing:0.370px;color:#878787;font-weight:bold;">Simulation snapshots @ 460.5nm</span>
<span class="t" style="left:65.80px;top:72.02px;font-size:13.5px;letter-spacing:0.196px;color:#38387c;-webkit-text-stroke:0.12px #38387c;">Plot</span>
<span class="t" style="left:112.20px;top:68.02px;font-size:13.5px;letter-spacing:0.260px;color:#38387c;-webkit-text-stroke:0.12px #38387c;">Scale</span>
<span class="t" style="left:37.20px;top:164.02px;font-size:13.5px;letter-spacing:0.454px;color:#111;-webkit-text-stroke:0.12px #111;">Pointer</span>
<span class="t" style="left:101.70px;top:164.02px;font-size:13.5px;letter-spacing:0.679px;color:#111;-webkit-text-stroke:0.12px #111;">Zoom</span>
<span class="t" style="left:155.60px;top:164.02px;font-size:13.5px;letter-spacing:0.865px;color:#111;-webkit-text-stroke:0.12px #111;">Move</span>
<span class="t" style="left:207.60px;top:164.02px;font-size:13.5px;letter-spacing:0.707px;color:#111;-webkit-text-stroke:0.12px #111;">Rotate</span>
<span class="t" style="left:268.40px;top:164.02px;font-size:13.5px;letter-spacing:0.188px;color:#111;-webkit-text-stroke:0.12px #111;">Colors</span>
<span class="t" style="left:747.40px;top:105.92px;font-size:27.8px;letter-spacing:1.502px;color:#000;">xy</span>
<span class="t" style="left:788.50px;top:105.92px;font-size:27.8px;letter-spacing:0.802px;color:#000;">yz</span>
<span class="t" style="left:747.40px;top:152.92px;font-size:27.8px;letter-spacing:0.902px;color:#000;">xz</span>
<span class="t" style="left:928.60px;top:156.02px;font-size:13.5px;letter-spacing:0.179px;color:#111;-webkit-text-stroke:0.12px #111;">Save</span>
<span class="t" style="left:927.30px;top:171.02px;font-size:13.5px;letter-spacing:0.459px;color:#111;-webkit-text-stroke:0.12px #111;">video</span>
<span class="t" style="left:982.60px;top:156.02px;font-size:13.5px;letter-spacing:0.552px;color:#111;-webkit-text-stroke:0.12px #111;">Storyboard</span>
<span class="t" style="left:979.60px;top:171.02px;font-size:13.5px;letter-spacing:0.647px;color:#111;-webkit-text-stroke:0.12px #111;">to clipboard</span>
<span class="t" style="left:1076.70px;top:164.02px;font-size:13.5px;letter-spacing:0.163px;color:#111;-webkit-text-stroke:0.12px #111;">Play</span>
<span class="t" style="left:33.40px;top:717.02px;font-size:13.5px;letter-spacing:0.547px;color:#111;-webkit-text-stroke:0.12px #111;">Path: /home/rod/Desktop/cooke-test/new/1e-2/1.4e-2/ray_trace/0/ray_.csv</span>
<span class="t" style="left:34.20px;top:740.02px;font-size:13.5px;letter-spacing:0.150px;color:#111;-webkit-text-stroke:0.12px #111;">z:</span>
<span class="t" style="left:205.00px;top:890.02px;font-size:13.5px;letter-spacing:0.497px;color:#111;-webkit-text-stroke:0.12px #111;">File to plot</span>
<span class="t" style="left:460.80px;top:890.02px;font-size:13.5px;letter-spacing:0.672px;color:#111;-webkit-text-stroke:0.12px #111;">Plot type</span>
<span class="t" style="left:28.10px;top:916.02px;font-size:13.5px;letter-spacing:0.000px;color:#111;-webkit-text-stroke:0.12px #111;">1</span>
<span class="t" style="left:45.20px;top:915.02px;font-size:13.5px;letter-spacing:0.298px;color:#111;-webkit-text-stroke:0.12px #111;">ray_.csv</span>
<span class="t" style="left:445.60px;top:915.02px;font-size:13.5px;letter-spacing:0.569px;color:#111;-webkit-text-stroke:0.12px #111;">Wireframe</span>
<span class="t" style="left:22.00px;top:1040.02px;font-size:13.5px;letter-spacing:0.604px;color:#111;-webkit-text-stroke:0.12px #111;">/home/rod/Desktop/cooke-test/new/ray_trace</span></div>
</body></html>
